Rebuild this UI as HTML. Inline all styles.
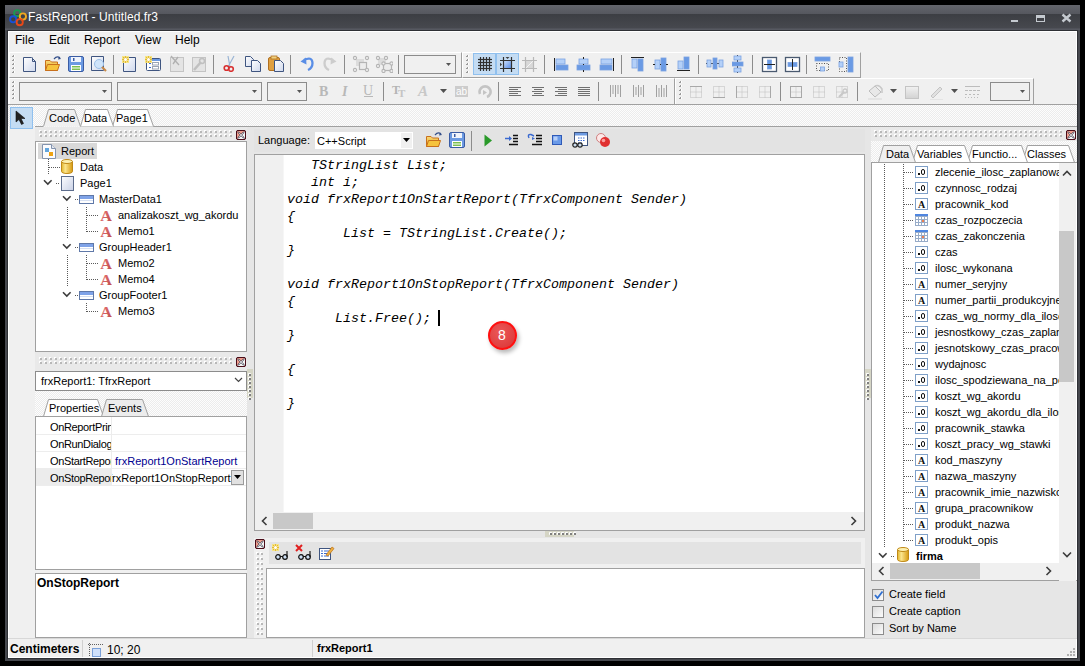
<!DOCTYPE html>
<html><head><meta charset="utf-8"><style>
html,body{margin:0;padding:0;width:1085px;height:666px;overflow:hidden;background:#000;}
div,svg{position:absolute;}
.t{white-space:pre;font-family:"Liberation Sans",sans-serif;}
.code{font-family:"Liberation Mono",monospace;font-style:italic;font-size:13.333px;line-height:13px;color:#000;}
</style></head><body>
<div style="left:5px;top:5px;width:1075px;height:656px;background:#46484e;"></div>
<div style="left:5px;top:5px;width:1075px;height:9px;background:linear-gradient(#63656c,#55575e);"></div>
<div style="left:5px;top:14px;width:1075px;height:15px;background:linear-gradient(#3c3e43,#47494f);"></div>
<div style="left:5px;top:28px;width:1075px;height:2px;background:linear-gradient(#4c4e55,#5a5d65);"></div>
<div style="left:7px;top:30px;width:1071px;height:629px;background:#2e3035;"></div>
<div style="left:8px;top:31px;width:1069px;height:627px;background:#f0f0f0;border:1px solid #fff;box-sizing:border-box;"></div>
<div class="t" style="left:28px;top:11px;font-size:12px;line-height:12px;font-weight:400;color:#fff;letter-spacing:0.08px;">FastReport - Untitled.fr3</div>
<div style="left:1011px;top:20px;width:7px;height:2px;background:#c4c9cf;"></div>
<div style="left:1036px;top:15px;width:9px;height:7px;border:1px solid #c4c9cf;border-top-width:3px;box-sizing:border-box;"></div>
<svg style="left:1061px;top:13px;" width="11" height="10" viewBox="0 0 11 10"><path d="M1.5 1.5 L9.5 8.5 M9.5 1.5 L1.5 8.5" stroke="#c4c9cf" stroke-width="2.4"/></svg>
<div class="t" style="left:15px;top:34px;font-size:12px;line-height:12px;font-weight:400;color:#000;">File</div>
<div class="t" style="left:49px;top:34px;font-size:12px;line-height:12px;font-weight:400;color:#000;">Edit</div>
<div class="t" style="left:84px;top:34px;font-size:12px;line-height:12px;font-weight:400;color:#000;">Report</div>
<div class="t" style="left:135px;top:34px;font-size:12px;line-height:12px;font-weight:400;color:#000;">View</div>
<div class="t" style="left:175px;top:34px;font-size:12px;line-height:12px;font-weight:400;color:#000;">Help</div>
<div style="left:9px;top:52px;width:453px;height:26px;background:#f0f0f0;border-top:1px solid #fff;border-left:1px solid #fff;border-right:1px solid #a0a0a0;border-bottom:1px solid #a0a0a0;box-sizing:border-box;"></div>
<div style="left:462px;top:52px;width:399px;height:26px;background:#f0f0f0;border-top:1px solid #fff;border-left:1px solid #fff;border-right:1px solid #a0a0a0;border-bottom:1px solid #a0a0a0;box-sizing:border-box;"></div>
<div style="left:9px;top:78px;width:666px;height:27px;background:#f0f0f0;border-top:1px solid #fff;border-left:1px solid #fff;border-right:1px solid #a0a0a0;border-bottom:1px solid #a0a0a0;box-sizing:border-box;"></div>
<div style="left:675px;top:78px;width:359px;height:27px;background:#f0f0f0;border-top:1px solid #fff;border-left:1px solid #fff;border-right:1px solid #a0a0a0;border-bottom:1px solid #a0a0a0;box-sizing:border-box;"></div>
<div style="left:113px;top:55px;width:1px;height:19px;background:#8c8c8c;"></div>
<div style="left:213px;top:55px;width:1px;height:19px;background:#8c8c8c;"></div>
<div style="left:290px;top:55px;width:1px;height:19px;background:#8c8c8c;"></div>
<div style="left:344px;top:55px;width:1px;height:19px;background:#8c8c8c;"></div>
<div style="left:398px;top:55px;width:1px;height:19px;background:#8c8c8c;"></div>
<div style="left:544px;top:55px;width:1px;height:19px;background:#8c8c8c;"></div>
<div style="left:621px;top:55px;width:1px;height:19px;background:#8c8c8c;"></div>
<div style="left:698px;top:55px;width:1px;height:19px;background:#8c8c8c;"></div>
<div style="left:752px;top:55px;width:1px;height:19px;background:#8c8c8c;"></div>
<div style="left:806px;top:55px;width:1px;height:19px;background:#8c8c8c;"></div>
<div style="left:383px;top:82px;width:1px;height:19px;background:#8c8c8c;"></div>
<div style="left:498px;top:82px;width:1px;height:19px;background:#8c8c8c;"></div>
<div style="left:598px;top:82px;width:1px;height:19px;background:#8c8c8c;"></div>
<div style="left:780px;top:82px;width:1px;height:19px;background:#8c8c8c;"></div>
<div style="left:857px;top:82px;width:1px;height:19px;background:#8c8c8c;"></div>
<svg style="left:12px;top:55px" width="3" height="21"><rect x="1" y="0" width="2" height="2" fill="#fff"/><rect x="0" y="1" width="2" height="1" fill="#9a9a9a"/><rect x="1" y="0" width="1" height="2" fill="#9a9a9a"/><rect x="1" y="4" width="2" height="2" fill="#fff"/><rect x="0" y="5" width="2" height="1" fill="#9a9a9a"/><rect x="1" y="4" width="1" height="2" fill="#9a9a9a"/><rect x="1" y="8" width="2" height="2" fill="#fff"/><rect x="0" y="9" width="2" height="1" fill="#9a9a9a"/><rect x="1" y="8" width="1" height="2" fill="#9a9a9a"/><rect x="1" y="12" width="2" height="2" fill="#fff"/><rect x="0" y="13" width="2" height="1" fill="#9a9a9a"/><rect x="1" y="12" width="1" height="2" fill="#9a9a9a"/><rect x="1" y="16" width="2" height="2" fill="#fff"/><rect x="0" y="17" width="2" height="1" fill="#9a9a9a"/><rect x="1" y="16" width="1" height="2" fill="#9a9a9a"/></svg>
<svg style="left:466px;top:55px" width="3" height="21"><rect x="1" y="0" width="2" height="2" fill="#fff"/><rect x="0" y="1" width="2" height="1" fill="#9a9a9a"/><rect x="1" y="0" width="1" height="2" fill="#9a9a9a"/><rect x="1" y="4" width="2" height="2" fill="#fff"/><rect x="0" y="5" width="2" height="1" fill="#9a9a9a"/><rect x="1" y="4" width="1" height="2" fill="#9a9a9a"/><rect x="1" y="8" width="2" height="2" fill="#fff"/><rect x="0" y="9" width="2" height="1" fill="#9a9a9a"/><rect x="1" y="8" width="1" height="2" fill="#9a9a9a"/><rect x="1" y="12" width="2" height="2" fill="#fff"/><rect x="0" y="13" width="2" height="1" fill="#9a9a9a"/><rect x="1" y="12" width="1" height="2" fill="#9a9a9a"/><rect x="1" y="16" width="2" height="2" fill="#fff"/><rect x="0" y="17" width="2" height="1" fill="#9a9a9a"/><rect x="1" y="16" width="1" height="2" fill="#9a9a9a"/></svg>
<svg style="left:12px;top:81px" width="3" height="22"><rect x="1" y="0" width="2" height="2" fill="#fff"/><rect x="0" y="1" width="2" height="1" fill="#9a9a9a"/><rect x="1" y="0" width="1" height="2" fill="#9a9a9a"/><rect x="1" y="4" width="2" height="2" fill="#fff"/><rect x="0" y="5" width="2" height="1" fill="#9a9a9a"/><rect x="1" y="4" width="1" height="2" fill="#9a9a9a"/><rect x="1" y="8" width="2" height="2" fill="#fff"/><rect x="0" y="9" width="2" height="1" fill="#9a9a9a"/><rect x="1" y="8" width="1" height="2" fill="#9a9a9a"/><rect x="1" y="12" width="2" height="2" fill="#fff"/><rect x="0" y="13" width="2" height="1" fill="#9a9a9a"/><rect x="1" y="12" width="1" height="2" fill="#9a9a9a"/><rect x="1" y="16" width="2" height="2" fill="#fff"/><rect x="0" y="17" width="2" height="1" fill="#9a9a9a"/><rect x="1" y="16" width="1" height="2" fill="#9a9a9a"/></svg>
<svg style="left:679px;top:81px" width="3" height="22"><rect x="1" y="0" width="2" height="2" fill="#fff"/><rect x="0" y="1" width="2" height="1" fill="#9a9a9a"/><rect x="1" y="0" width="1" height="2" fill="#9a9a9a"/><rect x="1" y="4" width="2" height="2" fill="#fff"/><rect x="0" y="5" width="2" height="1" fill="#9a9a9a"/><rect x="1" y="4" width="1" height="2" fill="#9a9a9a"/><rect x="1" y="8" width="2" height="2" fill="#fff"/><rect x="0" y="9" width="2" height="1" fill="#9a9a9a"/><rect x="1" y="8" width="1" height="2" fill="#9a9a9a"/><rect x="1" y="12" width="2" height="2" fill="#fff"/><rect x="0" y="13" width="2" height="1" fill="#9a9a9a"/><rect x="1" y="12" width="1" height="2" fill="#9a9a9a"/><rect x="1" y="16" width="2" height="2" fill="#fff"/><rect x="0" y="17" width="2" height="1" fill="#9a9a9a"/><rect x="1" y="16" width="1" height="2" fill="#9a9a9a"/></svg>
<div style="left:404px;top:55px;width:52px;height:19px;border:1px solid #8c8c8c;box-sizing:border-box;background:#f0f0f0;"></div>
<svg style="left:446px;top:63px;" width="6" height="4" viewBox="0 0 6 4"><path d="M0 0 H5 L2.5 3 Z" fill="#555"/></svg>
<div style="left:19px;top:82px;width:93px;height:19px;border:1px solid #8c8c8c;box-sizing:border-box;background:#f0f0f0;"></div>
<svg style="left:102px;top:90px;" width="6" height="4" viewBox="0 0 6 4"><path d="M0 0 H5 L2.5 3 Z" fill="#555"/></svg>
<div style="left:117px;top:82px;width:145px;height:19px;border:1px solid #8c8c8c;box-sizing:border-box;background:#f0f0f0;"></div>
<svg style="left:252px;top:90px;" width="6" height="4" viewBox="0 0 6 4"><path d="M0 0 H5 L2.5 3 Z" fill="#555"/></svg>
<div style="left:267px;top:82px;width:40px;height:19px;border:1px solid #8c8c8c;box-sizing:border-box;background:#f0f0f0;"></div>
<svg style="left:297px;top:90px;" width="6" height="4" viewBox="0 0 6 4"><path d="M0 0 H5 L2.5 3 Z" fill="#555"/></svg>
<div style="left:990px;top:82px;width:40px;height:19px;border:1px solid #8c8c8c;box-sizing:border-box;background:#f0f0f0;"></div>
<svg style="left:1020px;top:90px;" width="6" height="4" viewBox="0 0 6 4"><path d="M0 0 H5 L2.5 3 Z" fill="#555"/></svg>
<div style="left:473px;top:53px;width:23px;height:22px;background:#c4dcf3;border:1px solid #90c0ee;box-sizing:border-box;"></div>
<div style="left:496px;top:53px;width:23px;height:22px;background:#c4dcf3;border:1px solid #90c0ee;box-sizing:border-box;"></div>
<div style="left:8px;top:104px;width:1069px;height:23px;background:repeating-conic-gradient(#ececec 0% 25%, #fdfdfd 0% 50%) 0 0/2px 2px;"></div>
<div style="left:8px;top:104px;width:1069px;height:1px;background:#a0a0a0;"></div>
<div style="left:35px;top:126px;width:8px;height:1px;background:#a0a0a0;"></div>
<div style="left:81px;top:126px;width:996px;height:1px;background:#a0a0a0;"></div>
<div style="left:10px;top:107px;width:23px;height:22px;background:#c4dcf3;border:1px solid #90c0ee;box-sizing:border-box;"></div>
<svg style="left:112px;top:109px" width="42" height="18"><path d="M0.5 17.5 L5.5 0.5 H35.5 L41.5 17.5" fill="#fff" stroke="#a0a0a0" stroke-width="1"/></svg>
<svg style="left:80px;top:109px" width="34" height="18"><path d="M0.5 17.5 L5.5 0.5 H27.5 L33.5 17.5" fill="#fff" stroke="#a0a0a0" stroke-width="1"/></svg>
<svg style="left:43px;top:109px" width="38" height="18"><path d="M0.5 17.5 L5.5 0.5 H31.5 L37.5 17.5" fill="#f0f0f0" stroke="#a0a0a0" stroke-width="1"/></svg>
<div class="t" style="left:49px;top:113px;font-size:11px;line-height:11px;font-weight:400;color:#000;">Code</div>
<div class="t" style="left:84px;top:113px;font-size:11px;line-height:11px;font-weight:400;color:#000;">Data</div>
<div class="t" style="left:116px;top:113px;font-size:11px;line-height:11px;font-weight:400;color:#000;">Page1</div>
<div style="left:35px;top:127px;width:212px;height:14px;background:#e9e9e9;"></div>
<div style="left:35px;top:141px;width:212px;height:211px;background:#fff;border:1px solid #a0a0a0;box-sizing:border-box;"></div>
<div style="left:35px;top:352px;width:212px;height:19px;background:#e9e9e9;"></div>
<div style="left:35px;top:371px;width:212px;height:20px;background:#fff;border:1px solid #8c8c8c;box-sizing:border-box;"></div>
<div class="t" style="left:41px;top:376px;font-size:11px;line-height:11px;font-weight:400;color:#000;">frxReport1: TfrxReport</div>
<svg style="left:234px;top:377px;" width="10" height="7" viewBox="0 0 10 7"><path d="M1 1 L4.5 4.5 L8 1" stroke="#444" stroke-width="1.2" fill="none"/></svg>
<div style="left:35px;top:391px;width:212px;height:26px;background:repeating-conic-gradient(#ececec 0% 25%, #fdfdfd 0% 50%) 0 0/2px 2px;"></div>
<svg style="left:43px;top:399px" width="61" height="18"><path d="M0.5 17.5 L5.5 0.5 H54.5 L60.5 17.5" fill="#fff" stroke="#a0a0a0" stroke-width="1"/></svg>
<svg style="left:101px;top:399px" width="48" height="18"><path d="M0.5 17.5 L5.5 0.5 H41.5 L47.5 17.5" fill="#ececec" stroke="#a0a0a0" stroke-width="1"/></svg>
<div class="t" style="left:49px;top:403px;font-size:11px;line-height:11px;font-weight:400;color:#000;">Properties</div>
<div class="t" style="left:108px;top:403px;font-size:11px;line-height:11px;font-weight:400;color:#000;">Events</div>
<div style="left:35px;top:416px;width:212px;height:154px;background:#fff;border:1px solid #a0a0a0;box-sizing:border-box;"></div>
<div style="left:35px;top:573px;width:212px;height:65px;background:#fff;border:1px solid #a0a0a0;box-sizing:border-box;"></div>
<div class="t" style="left:37px;top:577px;font-size:12px;line-height:12px;font-weight:700;color:#000;">OnStopReport</div>
<div style="left:247px;top:127px;width:7px;height:511px;background:#e6e6e6;"></div>
<div style="left:247px;top:369px;width:6px;height:29px;background:#d5d5c5;"></div>
<div style="left:254px;top:127px;width:611px;height:27px;background:#e6e6e6;"></div>
<div style="left:254px;top:129px;width:611px;height:23px;background:#e3e3e3;"></div>
<div class="t" style="left:258px;top:135px;font-size:11px;line-height:11px;font-weight:400;color:#000;">Language:</div>
<div style="left:315px;top:132px;width:98px;height:17px;background:#fff;"></div>
<div style="left:401px;top:133px;width:11px;height:15px;background:#f0f0f0;"></div>
<svg style="left:403px;top:138px;" width="7" height="4" viewBox="0 0 7 4"><path d="M0 0 H7 L3.5 4 Z" fill="#000"/></svg>
<div class="t" style="left:317px;top:136px;font-size:11px;line-height:11px;font-weight:400;color:#000;">C++Script</div>
<div style="left:471px;top:131px;width:1px;height:20px;background:#8c8c8c;"></div>
<div style="left:254px;top:154px;width:611px;height:377px;background:#fff;border:1px solid #a0a0a0;box-sizing:border-box;"></div>
<div style="left:255px;top:155px;width:28px;height:357px;background:#f0f0f0;"></div>
<div style="left:283px;top:155px;width:1px;height:357px;background:#f6f6f6;"></div>
<div style="left:255px;top:512px;width:609px;height:18px;background:#f0f0f0;"></div>
<div style="left:273px;top:513px;width:40px;height:16px;background:#c8c8c8;"></div>
<div class="t code" style="left:287px;top:159px">   TStringList List;</div>
<div class="t code" style="left:287px;top:176px">   int i;</div>
<div class="t code" style="left:287px;top:193px">void frxReport1OnStartReport(TfrxComponent Sender)</div>
<div class="t code" style="left:287px;top:210px">{</div>
<div class="t code" style="left:287px;top:227px">       List = TStringList.Create();</div>
<div class="t code" style="left:287px;top:244px">}</div>
<div class="t code" style="left:287px;top:261px"></div>
<div class="t code" style="left:287px;top:278px">void frxReport1OnStopReport(TfrxComponent Sender)</div>
<div class="t code" style="left:287px;top:295px">{</div>
<div class="t code" style="left:287px;top:312px">      List.Free(); </div>
<div class="t code" style="left:287px;top:329px">}</div>
<div class="t code" style="left:287px;top:346px"></div>
<div class="t code" style="left:287px;top:363px">{</div>
<div class="t code" style="left:287px;top:380px"></div>
<div class="t code" style="left:287px;top:397px">}</div>
<div style="left:438px;top:310px;width:2px;height:16px;background:#000;"></div>
<div style="left:254px;top:531px;width:611px;height:7px;background:#e6e6e6;"></div>
<div style="left:545px;top:531px;width:29px;height:6px;background:#d5d5c5;"></div>
<div style="left:254px;top:538px;width:611px;height:100px;background:#f0f0f0;"></div>
<div style="left:269px;top:542px;width:592px;height:22px;background:#e3e3e3;"></div>
<div style="left:266px;top:568px;width:599px;height:70px;background:#fff;border:1px solid #a0a0a0;box-sizing:border-box;"></div>
<div style="left:865px;top:127px;width:6px;height:511px;background:#e6e6e6;"></div>
<div style="left:865px;top:369px;width:6px;height:29px;background:#d5d5c5;"></div>
<div style="left:871px;top:127px;width:206px;height:14px;background:#e9e9e9;"></div>
<div style="left:871px;top:141px;width:206px;height:21px;background:repeating-conic-gradient(#ececec 0% 25%, #fdfdfd 0% 50%) 0 0/2px 2px;"></div>
<svg style="left:1022px;top:145px" width="53" height="18"><path d="M0.5 17.5 L5.5 0.5 H46.5 L52.5 17.5" fill="#fff" stroke="#a0a0a0" stroke-width="1"/></svg>
<svg style="left:967px;top:145px" width="61" height="18"><path d="M0.5 17.5 L5.5 0.5 H54.5 L60.5 17.5" fill="#fff" stroke="#a0a0a0" stroke-width="1"/></svg>
<svg style="left:912px;top:145px" width="59" height="18"><path d="M0.5 17.5 L5.5 0.5 H52.5 L58.5 17.5" fill="#fff" stroke="#a0a0a0" stroke-width="1"/></svg>
<svg style="left:878px;top:145px" width="38" height="18"><path d="M0.5 17.5 L5.5 0.5 H31.5 L37.5 17.5" fill="#f0f0f0" stroke="#a0a0a0" stroke-width="1"/></svg>
<div class="t" style="left:886px;top:149px;font-size:11px;line-height:11px;font-weight:400;color:#000;">Data</div>
<div class="t" style="left:917px;top:149px;font-size:11px;line-height:11px;font-weight:400;color:#000;">Variables</div>
<div class="t" style="left:972px;top:149px;font-size:11px;line-height:11px;font-weight:400;color:#000;">Functio...</div>
<div class="t" style="left:1027px;top:149px;font-size:11px;line-height:11px;font-weight:400;color:#000;">Classes</div>
<div style="left:871px;top:162px;width:206px;height:419px;background:#fff;border:1px solid #a0a0a0;border-right:none;box-sizing:border-box;"></div>
<div style="left:1059px;top:163px;width:17px;height:400px;background:#f0f0f0;"></div>
<div style="left:1059px;top:231px;width:15px;height:151px;background:#c8c8c8;"></div>
<div style="left:872px;top:563px;width:187px;height:17px;background:#f0f0f0;"></div>
<div style="left:890px;top:563px;width:90px;height:16px;background:#c8c8c8;"></div>
<div style="left:871px;top:581px;width:206px;height:57px;background:#e6e6e6;"></div>
<div style="left:1059px;top:563px;width:17px;height:18px;background:#f0f0f0;"></div>
<div style="left:872px;top:589px;width:12px;height:12px;background:linear-gradient(135deg,#dcdcdc,#fbfbfb);border:1px solid #8c8c8c;box-sizing:border-box;"></div>
<div class="t" style="left:889px;top:589px;font-size:11px;line-height:11px;font-weight:400;color:#000;">Create field</div>
<div style="left:872px;top:606px;width:12px;height:12px;background:linear-gradient(135deg,#dcdcdc,#fbfbfb);border:1px solid #8c8c8c;box-sizing:border-box;"></div>
<div class="t" style="left:889px;top:606px;font-size:11px;line-height:11px;font-weight:400;color:#000;">Create caption</div>
<div style="left:872px;top:623px;width:12px;height:12px;background:linear-gradient(135deg,#dcdcdc,#fbfbfb);border:1px solid #8c8c8c;box-sizing:border-box;"></div>
<div class="t" style="left:889px;top:623px;font-size:11px;line-height:11px;font-weight:400;color:#000;">Sort by Name</div>
<div style="left:38px;top:143px;width:59px;height:16px;background:#d9d9d9;"></div>
<div style="left:36px;top:142px;width:210px;height:208px;overflow:hidden;">
<div class="t" style="left:25px;top:4px;font-size:11px;line-height:11px;">Report</div>
<div class="t" style="left:44px;top:20px;font-size:11px;line-height:11px;">Data</div>
<div class="t" style="left:44px;top:36px;font-size:11px;line-height:11px;">Page1</div>
<div class="t" style="left:63px;top:52px;font-size:11px;line-height:11px;">MasterData1</div>
<div class="t" style="left:82px;top:68px;font-size:11px;line-height:11px;">analizakoszt_wg_akordu</div>
<div class="t" style="left:82px;top:84px;font-size:11px;line-height:11px;">Memo1</div>
<div class="t" style="left:63px;top:100px;font-size:11px;line-height:11px;">GroupHeader1</div>
<div class="t" style="left:82px;top:116px;font-size:11px;line-height:11px;">Memo2</div>
<div class="t" style="left:82px;top:132px;font-size:11px;line-height:11px;">Memo4</div>
<div class="t" style="left:63px;top:148px;font-size:11px;line-height:11px;">GroupFooter1</div>
<div class="t" style="left:82px;top:164px;font-size:11px;line-height:11px;">Memo3</div>
</div>
<svg style="left:42px;top:144px;" width="14" height="15" viewBox="0 0 14 15"><path d="M0.5 0.5 H9.5 L13.5 4.5 V14.5 H0.5 Z" fill="#fbfbfd" stroke="#8393ad"/><path d="M9.5 0.5 V4.5 H13.5" fill="#e4e8f0" stroke="#8393ad"/><rect x="3" y="4" width="4" height="4" fill="#63a6dd"/><rect x="7" y="8" width="4" height="4" fill="#eea312"/></svg>
<svg style="left:61px;top:159px;" width="12" height="15" viewBox="0 0 12 15"><defs><linearGradient id="dbg" x1="0" x2="1"><stop offset="0" stop-color="#e2b52a"/><stop offset="0.35" stop-color="#fbe58e"/><stop offset="1" stop-color="#d79a10"/></linearGradient></defs><path d="M0.5 2.5 V12.5 A5.5 2 0 0 0 11.5 12.5 V2.5" fill="url(#dbg)" stroke="#c08a18"/><ellipse cx="6" cy="2.5" rx="5.5" ry="2" fill="#fdf0b0" stroke="#c08a18"/></svg>
<svg style="left:61px;top:176px;" width="13" height="15" viewBox="0 0 13 15"><defs><linearGradient id="pg" x1="0" y1="0" x2="1" y2="1"><stop offset="0" stop-color="#fdfdff"/><stop offset="1" stop-color="#c9d1e6"/></linearGradient></defs><rect x="0.5" y="0.5" width="12" height="14" fill="url(#pg)" stroke="#5c6c8c"/></svg>
<svg style="left:43px;top:179px;" width="10" height="7" viewBox="0 0 10 7"><path d="M1 1.2 L4.8 5 L8.6 1.2" stroke="#3c3c3c" stroke-width="1.6" fill="none"/></svg>
<div style="left:56px;top:183px;width:3px;height:1px;background:repeating-linear-gradient(90deg,#5a5a5a 0 1px,transparent 1px 2px);"></div>
<svg style="left:79px;top:195px;" width="15" height="9" viewBox="0 0 15 9"><rect x="0.5" y="0.5" width="14" height="8" fill="#fff" stroke="#5f78a8"/><rect x="1" y="1" width="13" height="3" fill="#7fa3e8"/><rect x="1" y="5" width="13" height="1" fill="#d5dff2"/></svg>
<svg style="left:62px;top:195px;" width="10" height="7" viewBox="0 0 10 7"><path d="M1 1.2 L4.8 5 L8.6 1.2" stroke="#3c3c3c" stroke-width="1.6" fill="none"/></svg>
<div style="left:75px;top:199px;width:3px;height:1px;background:repeating-linear-gradient(90deg,#5a5a5a 0 1px,transparent 1px 2px);"></div>
<svg style="left:99px;top:210px;" width="13" height="12" viewBox="0 0 13 12"><defs><linearGradient id="ma" x1="0" y1="0" x2="1" y2="1"><stop offset="0" stop-color="#f07a7a"/><stop offset="1" stop-color="#b84848"/></linearGradient></defs><text x="6.5" y="11" text-anchor="middle" font-family="Liberation Serif" font-weight="700" font-size="15" fill="url(#ma)" transform="scale(1.08,1)">A</text></svg>
<svg style="left:99px;top:226px;" width="13" height="12" viewBox="0 0 13 12"><defs><linearGradient id="ma" x1="0" y1="0" x2="1" y2="1"><stop offset="0" stop-color="#f07a7a"/><stop offset="1" stop-color="#b84848"/></linearGradient></defs><text x="6.5" y="11" text-anchor="middle" font-family="Liberation Serif" font-weight="700" font-size="15" fill="url(#ma)" transform="scale(1.08,1)">A</text></svg>
<svg style="left:79px;top:243px;" width="15" height="9" viewBox="0 0 15 9"><rect x="0.5" y="0.5" width="14" height="8" fill="#fff" stroke="#5f78a8"/><rect x="1" y="1" width="13" height="3" fill="#7fa3e8"/><rect x="1" y="5" width="13" height="1" fill="#d5dff2"/></svg>
<svg style="left:62px;top:243px;" width="10" height="7" viewBox="0 0 10 7"><path d="M1 1.2 L4.8 5 L8.6 1.2" stroke="#3c3c3c" stroke-width="1.6" fill="none"/></svg>
<div style="left:75px;top:247px;width:3px;height:1px;background:repeating-linear-gradient(90deg,#5a5a5a 0 1px,transparent 1px 2px);"></div>
<svg style="left:99px;top:258px;" width="13" height="12" viewBox="0 0 13 12"><defs><linearGradient id="ma" x1="0" y1="0" x2="1" y2="1"><stop offset="0" stop-color="#f07a7a"/><stop offset="1" stop-color="#b84848"/></linearGradient></defs><text x="6.5" y="11" text-anchor="middle" font-family="Liberation Serif" font-weight="700" font-size="15" fill="url(#ma)" transform="scale(1.08,1)">A</text></svg>
<svg style="left:99px;top:274px;" width="13" height="12" viewBox="0 0 13 12"><defs><linearGradient id="ma" x1="0" y1="0" x2="1" y2="1"><stop offset="0" stop-color="#f07a7a"/><stop offset="1" stop-color="#b84848"/></linearGradient></defs><text x="6.5" y="11" text-anchor="middle" font-family="Liberation Serif" font-weight="700" font-size="15" fill="url(#ma)" transform="scale(1.08,1)">A</text></svg>
<svg style="left:79px;top:291px;" width="15" height="9" viewBox="0 0 15 9"><rect x="0.5" y="0.5" width="14" height="8" fill="#fff" stroke="#5f78a8"/><rect x="1" y="1" width="13" height="3" fill="#7fa3e8"/><rect x="1" y="5" width="13" height="1" fill="#d5dff2"/></svg>
<svg style="left:62px;top:291px;" width="10" height="7" viewBox="0 0 10 7"><path d="M1 1.2 L4.8 5 L8.6 1.2" stroke="#3c3c3c" stroke-width="1.6" fill="none"/></svg>
<div style="left:75px;top:295px;width:3px;height:1px;background:repeating-linear-gradient(90deg,#5a5a5a 0 1px,transparent 1px 2px);"></div>
<svg style="left:99px;top:306px;" width="13" height="12" viewBox="0 0 13 12"><defs><linearGradient id="ma" x1="0" y1="0" x2="1" y2="1"><stop offset="0" stop-color="#f07a7a"/><stop offset="1" stop-color="#b84848"/></linearGradient></defs><text x="6.5" y="11" text-anchor="middle" font-family="Liberation Serif" font-weight="700" font-size="15" fill="url(#ma)" transform="scale(1.08,1)">A</text></svg>
<div style="left:48px;top:159px;width:1px;height:16px;background:repeating-linear-gradient(#5a5a5a 0 1px,transparent 1px 2px);"></div>
<div style="left:49px;top:167px;width:11px;height:1px;background:repeating-linear-gradient(90deg,#5a5a5a 0 1px,transparent 1px 2px);"></div>
<div style="left:67px;top:207px;width:1px;height:32px;background:repeating-linear-gradient(#5a5a5a 0 1px,transparent 1px 2px);"></div>
<div style="left:67px;top:255px;width:1px;height:32px;background:repeating-linear-gradient(#5a5a5a 0 1px,transparent 1px 2px);"></div>
<div style="left:86px;top:207px;width:1px;height:25px;background:repeating-linear-gradient(#5a5a5a 0 1px,transparent 1px 2px);"></div>
<div style="left:86px;top:255px;width:1px;height:25px;background:repeating-linear-gradient(#5a5a5a 0 1px,transparent 1px 2px);"></div>
<div style="left:87px;top:215px;width:11px;height:1px;background:repeating-linear-gradient(90deg,#5a5a5a 0 1px,transparent 1px 2px);"></div>
<div style="left:87px;top:231px;width:11px;height:1px;background:repeating-linear-gradient(90deg,#5a5a5a 0 1px,transparent 1px 2px);"></div>
<div style="left:87px;top:263px;width:11px;height:1px;background:repeating-linear-gradient(90deg,#5a5a5a 0 1px,transparent 1px 2px);"></div>
<div style="left:87px;top:279px;width:11px;height:1px;background:repeating-linear-gradient(90deg,#5a5a5a 0 1px,transparent 1px 2px);"></div>
<div style="left:87px;top:311px;width:11px;height:1px;background:repeating-linear-gradient(90deg,#5a5a5a 0 1px,transparent 1px 2px);"></div>
<div style="left:86px;top:303px;width:1px;height:9px;background:repeating-linear-gradient(#5a5a5a 0 1px,transparent 1px 2px);"></div>
<div style="left:36px;top:417px;width:210px;height:152px;overflow:hidden;">
<div style="left:0;top:17px;width:210px;height:1px;background:#ededed;"></div>
<div style="left:0;top:34px;width:210px;height:1px;background:#ededed;"></div>
<div style="left:0;top:51px;width:210px;height:1px;background:#ededed;"></div>
<div style="left:0;top:68px;width:210px;height:1px;background:#ededed;"></div>
<div style="left:0;top:51px;width:75px;height:17px;background:#ececec;"></div>
<div style="left:75px;top:0;width:1px;height:68px;background:#ececec;"></div>
<div style="left:14px;top:0px;width:61px;height:17px;overflow:hidden;"><div class="t" style="left:0;top:5px;font-size:11px;line-height:11px;letter-spacing:-0.35px;">OnReportPrint</div></div>
<div style="left:14px;top:17px;width:61px;height:17px;overflow:hidden;"><div class="t" style="left:0;top:5px;font-size:11px;line-height:11px;letter-spacing:-0.35px;">OnRunDialog</div></div>
<div style="left:14px;top:34px;width:61px;height:17px;overflow:hidden;"><div class="t" style="left:0;top:5px;font-size:11px;line-height:11px;letter-spacing:-0.35px;">OnStartReport</div></div>
<div style="left:14px;top:51px;width:61px;height:17px;overflow:hidden;"><div class="t" style="left:0;top:5px;font-size:11px;line-height:11px;letter-spacing:-0.35px;">OnStopReport</div></div>
<div class="t" style="left:79px;top:39px;font-size:11px;line-height:11px;color:#000090;">frxReport1OnStartReport</div>
<div style="left:76px;top:51px;width:119px;height:17px;overflow:hidden;"><div class="t" style="left:-3px;top:5px;font-size:11px;line-height:11px;">frxReport1OnStopReport</div></div>
</div>
<div style="left:231px;top:470px;width:13px;height:15px;background:#e1e1e1;border:1px solid #9a9a9a;box-sizing:border-box;"></div>
<svg style="left:234px;top:475px;" width="7" height="4" viewBox="0 0 7 4"><path d="M0 0 H7 L3.5 4 Z" fill="#000"/></svg>
<div style="left:872px;top:163px;width:187px;height:401px;overflow:hidden;">
<div class="t" style="left:63px;top:4px;font-size:11px;line-height:11px;">zlecenie_ilosc_zaplanowane</div>
<div class="t" style="left:63px;top:20px;font-size:11px;line-height:11px;">czynnosc_rodzaj</div>
<div class="t" style="left:63px;top:36px;font-size:11px;line-height:11px;">pracownik_kod</div>
<div class="t" style="left:63px;top:52px;font-size:11px;line-height:11px;">czas_rozpoczecia</div>
<div class="t" style="left:63px;top:68px;font-size:11px;line-height:11px;">czas_zakonczenia</div>
<div class="t" style="left:63px;top:84px;font-size:11px;line-height:11px;">czas</div>
<div class="t" style="left:63px;top:100px;font-size:11px;line-height:11px;">ilosc_wykonana</div>
<div class="t" style="left:63px;top:116px;font-size:11px;line-height:11px;">numer_seryjny</div>
<div class="t" style="left:63px;top:132px;font-size:11px;line-height:11px;">numer_partii_produkcyjnej</div>
<div class="t" style="left:63px;top:148px;font-size:11px;line-height:11px;">czas_wg_normy_dla_ilosci</div>
<div class="t" style="left:63px;top:164px;font-size:11px;line-height:11px;">jesnostkowy_czas_zaplanowany</div>
<div class="t" style="left:63px;top:180px;font-size:11px;line-height:11px;">jesnotskowy_czas_pracownika</div>
<div class="t" style="left:63px;top:196px;font-size:11px;line-height:11px;">wydajnosc</div>
<div class="t" style="left:63px;top:212px;font-size:11px;line-height:11px;">ilosc_spodziewana_na_podstawie</div>
<div class="t" style="left:63px;top:228px;font-size:11px;line-height:11px;">koszt_wg_akordu</div>
<div class="t" style="left:63px;top:244px;font-size:11px;line-height:11px;">koszt_wg_akordu_dla_ilosci</div>
<div class="t" style="left:63px;top:260px;font-size:11px;line-height:11px;">pracownik_stawka</div>
<div class="t" style="left:63px;top:276px;font-size:11px;line-height:11px;">koszt_pracy_wg_stawki</div>
<div class="t" style="left:63px;top:292px;font-size:11px;line-height:11px;">kod_maszyny</div>
<div class="t" style="left:63px;top:308px;font-size:11px;line-height:11px;">nazwa_maszyny</div>
<div class="t" style="left:63px;top:324px;font-size:11px;line-height:11px;">pracownik_imie_nazwisko</div>
<div class="t" style="left:63px;top:340px;font-size:11px;line-height:11px;">grupa_pracownikow</div>
<div class="t" style="left:63px;top:356px;font-size:11px;line-height:11px;">produkt_nazwa</div>
<div class="t" style="left:63px;top:372px;font-size:11px;line-height:11px;">produkt_opis</div>
<div class="t" style="left:44px;top:388px;font-size:11px;line-height:11px;font-weight:700;">firma</div>
</div>
<svg style="left:915px;top:166px;" width="13" height="12" viewBox="0 0 13 12"><rect x="0.5" y="0.5" width="12" height="11" fill="#fff" stroke="#7fa0c8"/><rect x="3" y="7" width="2" height="2" fill="#111"/><rect x="6.5" y="3.5" width="3" height="5" rx="1.5" fill="none" stroke="#111" stroke-width="1"/></svg>
<div style="left:904px;top:172px;width:10px;height:1px;background:repeating-linear-gradient(90deg,#5a5a5a 0 1px,transparent 1px 2px);"></div>
<svg style="left:915px;top:182px;" width="13" height="12" viewBox="0 0 13 12"><rect x="0.5" y="0.5" width="12" height="11" fill="#fff" stroke="#7fa0c8"/><rect x="3" y="7" width="2" height="2" fill="#111"/><rect x="6.5" y="3.5" width="3" height="5" rx="1.5" fill="none" stroke="#111" stroke-width="1"/></svg>
<div style="left:904px;top:188px;width:10px;height:1px;background:repeating-linear-gradient(90deg,#5a5a5a 0 1px,transparent 1px 2px);"></div>
<svg style="left:915px;top:198px;" width="13" height="12" viewBox="0 0 13 12"><rect x="0.5" y="0.5" width="12" height="11" fill="#fff" stroke="#7fa0c8"/><text x="6.5" y="10" text-anchor="middle" font-family="Liberation Serif" font-weight="700" font-size="10" fill="#111">A</text></svg>
<div style="left:904px;top:204px;width:10px;height:1px;background:repeating-linear-gradient(90deg,#5a5a5a 0 1px,transparent 1px 2px);"></div>
<svg style="left:915px;top:214px;" width="13" height="12" viewBox="0 0 13 12"><rect x="0" y="0" width="13" height="12" fill="#98acc8"/><rect x="0" y="0" width="13" height="2" fill="#4f86e0"/><rect x="1" y="3" width="2" height="2" fill="#fff"/><rect x="1" y="6" width="2" height="2" fill="#fff"/><rect x="1" y="9" width="2" height="2" fill="#fff"/><rect x="4" y="3" width="2" height="2" fill="#fff"/><rect x="4" y="6" width="2" height="2" fill="#fff"/><rect x="4" y="9" width="2" height="2" fill="#fff"/><rect x="7" y="3" width="2" height="2" fill="#fff"/><rect x="7" y="6" width="2" height="2" fill="#f08050"/><rect x="7" y="9" width="2" height="2" fill="#fff"/><rect x="10" y="3" width="2" height="2" fill="#fff"/><rect x="10" y="6" width="2" height="2" fill="#fff"/><rect x="10" y="9" width="2" height="2" fill="#fff"/></svg>
<div style="left:904px;top:220px;width:10px;height:1px;background:repeating-linear-gradient(90deg,#5a5a5a 0 1px,transparent 1px 2px);"></div>
<svg style="left:915px;top:230px;" width="13" height="12" viewBox="0 0 13 12"><rect x="0" y="0" width="13" height="12" fill="#98acc8"/><rect x="0" y="0" width="13" height="2" fill="#4f86e0"/><rect x="1" y="3" width="2" height="2" fill="#fff"/><rect x="1" y="6" width="2" height="2" fill="#fff"/><rect x="1" y="9" width="2" height="2" fill="#fff"/><rect x="4" y="3" width="2" height="2" fill="#fff"/><rect x="4" y="6" width="2" height="2" fill="#fff"/><rect x="4" y="9" width="2" height="2" fill="#fff"/><rect x="7" y="3" width="2" height="2" fill="#fff"/><rect x="7" y="6" width="2" height="2" fill="#f08050"/><rect x="7" y="9" width="2" height="2" fill="#fff"/><rect x="10" y="3" width="2" height="2" fill="#fff"/><rect x="10" y="6" width="2" height="2" fill="#fff"/><rect x="10" y="9" width="2" height="2" fill="#fff"/></svg>
<div style="left:904px;top:236px;width:10px;height:1px;background:repeating-linear-gradient(90deg,#5a5a5a 0 1px,transparent 1px 2px);"></div>
<svg style="left:915px;top:246px;" width="13" height="12" viewBox="0 0 13 12"><rect x="0.5" y="0.5" width="12" height="11" fill="#fff" stroke="#7fa0c8"/><rect x="3" y="7" width="2" height="2" fill="#111"/><rect x="6.5" y="3.5" width="3" height="5" rx="1.5" fill="none" stroke="#111" stroke-width="1"/></svg>
<div style="left:904px;top:252px;width:10px;height:1px;background:repeating-linear-gradient(90deg,#5a5a5a 0 1px,transparent 1px 2px);"></div>
<svg style="left:915px;top:262px;" width="13" height="12" viewBox="0 0 13 12"><rect x="0.5" y="0.5" width="12" height="11" fill="#fff" stroke="#7fa0c8"/><rect x="3" y="7" width="2" height="2" fill="#111"/><rect x="6.5" y="3.5" width="3" height="5" rx="1.5" fill="none" stroke="#111" stroke-width="1"/></svg>
<div style="left:904px;top:268px;width:10px;height:1px;background:repeating-linear-gradient(90deg,#5a5a5a 0 1px,transparent 1px 2px);"></div>
<svg style="left:915px;top:278px;" width="13" height="12" viewBox="0 0 13 12"><rect x="0.5" y="0.5" width="12" height="11" fill="#fff" stroke="#7fa0c8"/><text x="6.5" y="10" text-anchor="middle" font-family="Liberation Serif" font-weight="700" font-size="10" fill="#111">A</text></svg>
<div style="left:904px;top:284px;width:10px;height:1px;background:repeating-linear-gradient(90deg,#5a5a5a 0 1px,transparent 1px 2px);"></div>
<svg style="left:915px;top:294px;" width="13" height="12" viewBox="0 0 13 12"><rect x="0.5" y="0.5" width="12" height="11" fill="#fff" stroke="#7fa0c8"/><text x="6.5" y="10" text-anchor="middle" font-family="Liberation Serif" font-weight="700" font-size="10" fill="#111">A</text></svg>
<div style="left:904px;top:300px;width:10px;height:1px;background:repeating-linear-gradient(90deg,#5a5a5a 0 1px,transparent 1px 2px);"></div>
<svg style="left:915px;top:310px;" width="13" height="12" viewBox="0 0 13 12"><rect x="0.5" y="0.5" width="12" height="11" fill="#fff" stroke="#7fa0c8"/><rect x="3" y="7" width="2" height="2" fill="#111"/><rect x="6.5" y="3.5" width="3" height="5" rx="1.5" fill="none" stroke="#111" stroke-width="1"/></svg>
<div style="left:904px;top:316px;width:10px;height:1px;background:repeating-linear-gradient(90deg,#5a5a5a 0 1px,transparent 1px 2px);"></div>
<svg style="left:915px;top:326px;" width="13" height="12" viewBox="0 0 13 12"><rect x="0.5" y="0.5" width="12" height="11" fill="#fff" stroke="#7fa0c8"/><rect x="3" y="7" width="2" height="2" fill="#111"/><rect x="6.5" y="3.5" width="3" height="5" rx="1.5" fill="none" stroke="#111" stroke-width="1"/></svg>
<div style="left:904px;top:332px;width:10px;height:1px;background:repeating-linear-gradient(90deg,#5a5a5a 0 1px,transparent 1px 2px);"></div>
<svg style="left:915px;top:342px;" width="13" height="12" viewBox="0 0 13 12"><rect x="0.5" y="0.5" width="12" height="11" fill="#fff" stroke="#7fa0c8"/><rect x="3" y="7" width="2" height="2" fill="#111"/><rect x="6.5" y="3.5" width="3" height="5" rx="1.5" fill="none" stroke="#111" stroke-width="1"/></svg>
<div style="left:904px;top:348px;width:10px;height:1px;background:repeating-linear-gradient(90deg,#5a5a5a 0 1px,transparent 1px 2px);"></div>
<svg style="left:915px;top:358px;" width="13" height="12" viewBox="0 0 13 12"><rect x="0.5" y="0.5" width="12" height="11" fill="#fff" stroke="#7fa0c8"/><rect x="3" y="7" width="2" height="2" fill="#111"/><rect x="6.5" y="3.5" width="3" height="5" rx="1.5" fill="none" stroke="#111" stroke-width="1"/></svg>
<div style="left:904px;top:364px;width:10px;height:1px;background:repeating-linear-gradient(90deg,#5a5a5a 0 1px,transparent 1px 2px);"></div>
<svg style="left:915px;top:374px;" width="13" height="12" viewBox="0 0 13 12"><rect x="0.5" y="0.5" width="12" height="11" fill="#fff" stroke="#7fa0c8"/><rect x="3" y="7" width="2" height="2" fill="#111"/><rect x="6.5" y="3.5" width="3" height="5" rx="1.5" fill="none" stroke="#111" stroke-width="1"/></svg>
<div style="left:904px;top:380px;width:10px;height:1px;background:repeating-linear-gradient(90deg,#5a5a5a 0 1px,transparent 1px 2px);"></div>
<svg style="left:915px;top:390px;" width="13" height="12" viewBox="0 0 13 12"><rect x="0.5" y="0.5" width="12" height="11" fill="#fff" stroke="#7fa0c8"/><rect x="3" y="7" width="2" height="2" fill="#111"/><rect x="6.5" y="3.5" width="3" height="5" rx="1.5" fill="none" stroke="#111" stroke-width="1"/></svg>
<div style="left:904px;top:396px;width:10px;height:1px;background:repeating-linear-gradient(90deg,#5a5a5a 0 1px,transparent 1px 2px);"></div>
<svg style="left:915px;top:406px;" width="13" height="12" viewBox="0 0 13 12"><rect x="0.5" y="0.5" width="12" height="11" fill="#fff" stroke="#7fa0c8"/><rect x="3" y="7" width="2" height="2" fill="#111"/><rect x="6.5" y="3.5" width="3" height="5" rx="1.5" fill="none" stroke="#111" stroke-width="1"/></svg>
<div style="left:904px;top:412px;width:10px;height:1px;background:repeating-linear-gradient(90deg,#5a5a5a 0 1px,transparent 1px 2px);"></div>
<svg style="left:915px;top:422px;" width="13" height="12" viewBox="0 0 13 12"><rect x="0.5" y="0.5" width="12" height="11" fill="#fff" stroke="#7fa0c8"/><rect x="3" y="7" width="2" height="2" fill="#111"/><rect x="6.5" y="3.5" width="3" height="5" rx="1.5" fill="none" stroke="#111" stroke-width="1"/></svg>
<div style="left:904px;top:428px;width:10px;height:1px;background:repeating-linear-gradient(90deg,#5a5a5a 0 1px,transparent 1px 2px);"></div>
<svg style="left:915px;top:438px;" width="13" height="12" viewBox="0 0 13 12"><rect x="0.5" y="0.5" width="12" height="11" fill="#fff" stroke="#7fa0c8"/><rect x="3" y="7" width="2" height="2" fill="#111"/><rect x="6.5" y="3.5" width="3" height="5" rx="1.5" fill="none" stroke="#111" stroke-width="1"/></svg>
<div style="left:904px;top:444px;width:10px;height:1px;background:repeating-linear-gradient(90deg,#5a5a5a 0 1px,transparent 1px 2px);"></div>
<svg style="left:915px;top:454px;" width="13" height="12" viewBox="0 0 13 12"><rect x="0.5" y="0.5" width="12" height="11" fill="#fff" stroke="#7fa0c8"/><text x="6.5" y="10" text-anchor="middle" font-family="Liberation Serif" font-weight="700" font-size="10" fill="#111">A</text></svg>
<div style="left:904px;top:460px;width:10px;height:1px;background:repeating-linear-gradient(90deg,#5a5a5a 0 1px,transparent 1px 2px);"></div>
<svg style="left:915px;top:470px;" width="13" height="12" viewBox="0 0 13 12"><rect x="0.5" y="0.5" width="12" height="11" fill="#fff" stroke="#7fa0c8"/><text x="6.5" y="10" text-anchor="middle" font-family="Liberation Serif" font-weight="700" font-size="10" fill="#111">A</text></svg>
<div style="left:904px;top:476px;width:10px;height:1px;background:repeating-linear-gradient(90deg,#5a5a5a 0 1px,transparent 1px 2px);"></div>
<svg style="left:915px;top:486px;" width="13" height="12" viewBox="0 0 13 12"><rect x="0.5" y="0.5" width="12" height="11" fill="#fff" stroke="#7fa0c8"/><text x="6.5" y="10" text-anchor="middle" font-family="Liberation Serif" font-weight="700" font-size="10" fill="#111">A</text></svg>
<div style="left:904px;top:492px;width:10px;height:1px;background:repeating-linear-gradient(90deg,#5a5a5a 0 1px,transparent 1px 2px);"></div>
<svg style="left:915px;top:502px;" width="13" height="12" viewBox="0 0 13 12"><rect x="0.5" y="0.5" width="12" height="11" fill="#fff" stroke="#7fa0c8"/><text x="6.5" y="10" text-anchor="middle" font-family="Liberation Serif" font-weight="700" font-size="10" fill="#111">A</text></svg>
<div style="left:904px;top:508px;width:10px;height:1px;background:repeating-linear-gradient(90deg,#5a5a5a 0 1px,transparent 1px 2px);"></div>
<svg style="left:915px;top:518px;" width="13" height="12" viewBox="0 0 13 12"><rect x="0.5" y="0.5" width="12" height="11" fill="#fff" stroke="#7fa0c8"/><text x="6.5" y="10" text-anchor="middle" font-family="Liberation Serif" font-weight="700" font-size="10" fill="#111">A</text></svg>
<div style="left:904px;top:524px;width:10px;height:1px;background:repeating-linear-gradient(90deg,#5a5a5a 0 1px,transparent 1px 2px);"></div>
<svg style="left:915px;top:534px;" width="13" height="12" viewBox="0 0 13 12"><rect x="0.5" y="0.5" width="12" height="11" fill="#fff" stroke="#7fa0c8"/><text x="6.5" y="10" text-anchor="middle" font-family="Liberation Serif" font-weight="700" font-size="10" fill="#111">A</text></svg>
<div style="left:904px;top:540px;width:10px;height:1px;background:repeating-linear-gradient(90deg,#5a5a5a 0 1px,transparent 1px 2px);"></div>
<div style="left:884px;top:164px;width:1px;height:383px;background:repeating-linear-gradient(#5a5a5a 0 1px,transparent 1px 2px);"></div>
<div style="left:903px;top:164px;width:1px;height:377px;background:repeating-linear-gradient(#5a5a5a 0 1px,transparent 1px 2px);"></div>
<svg style="left:878px;top:552px;" width="10" height="7" viewBox="0 0 10 7"><path d="M1 1.2 L4.8 5 L8.6 1.2" stroke="#3c3c3c" stroke-width="1.6" fill="none"/></svg>
<div style="left:891px;top:556px;width:4px;height:1px;background:repeating-linear-gradient(90deg,#5a5a5a 0 1px,transparent 1px 2px);"></div>
<svg style="left:897px;top:547px;" width="12" height="15" viewBox="0 0 12 15"><defs><linearGradient id="dbg" x1="0" x2="1"><stop offset="0" stop-color="#e2b52a"/><stop offset="0.35" stop-color="#fbe58e"/><stop offset="1" stop-color="#d79a10"/></linearGradient></defs><path d="M0.5 2.5 V12.5 A5.5 2 0 0 0 11.5 12.5 V2.5" fill="url(#dbg)" stroke="#c08a18"/><ellipse cx="6" cy="2.5" rx="5.5" ry="2" fill="#fdf0b0" stroke="#c08a18"/></svg>
<svg style="left:1062px;top:170px;" width="10" height="7" viewBox="0 0 10 7"><path d="M1 5.5 L5 1.5 L9 5.5" stroke="#3c3c3c" stroke-width="1.6" fill="none"/></svg>
<svg style="left:1062px;top:551px;" width="10" height="7" viewBox="0 0 10 7"><path d="M1 1.5 L5 5.5 L9 1.5" stroke="#3c3c3c" stroke-width="1.6" fill="none"/></svg>
<svg style="left:878px;top:566px;" width="7" height="10" viewBox="0 0 7 10"><path d="M5.5 1 L1.5 5 L5.5 9" stroke="#3c3c3c" stroke-width="1.6" fill="none"/></svg>
<svg style="left:1045px;top:566px;" width="7" height="10" viewBox="0 0 7 10"><path d="M1.5 1 L5.5 5 L1.5 9" stroke="#3c3c3c" stroke-width="1.6" fill="none"/></svg>
<svg style="left:261px;top:516px;" width="7" height="10" viewBox="0 0 7 10"><path d="M5.5 1 L1.5 5 L5.5 9" stroke="#3c3c3c" stroke-width="1.6" fill="none"/></svg>
<svg style="left:850px;top:516px;" width="7" height="10" viewBox="0 0 7 10"><path d="M1.5 1 L5.5 5 L1.5 9" stroke="#3c3c3c" stroke-width="1.6" fill="none"/></svg>
<svg style="left:873px;top:590px;" width="11" height="10" viewBox="0 0 11 10"><path d="M2 5 L4.5 8 L9.5 1.5" stroke="#2f6fd0" stroke-width="1.8" fill="none"/></svg>
<div style="left:8px;top:638px;width:1069px;height:1px;background:#d8d8d8;"></div>
<div class="t" style="left:10px;top:643px;font-size:12px;line-height:12px;font-weight:700;color:#000;">Centimeters</div>
<div style="left:82px;top:640px;width:1px;height:17px;background:#d0d0d0;"></div>
<div class="t" style="left:107px;top:644px;font-size:12px;line-height:12px;font-weight:400;color:#000;">10; 20</div>
<div style="left:312px;top:640px;width:1px;height:17px;background:#d0d0d0;"></div>
<div class="t" style="left:317px;top:643px;font-size:11px;line-height:11px;font-weight:700;color:#000;">frxReport1</div>
<svg style="left:8px;top:8px;" width="20" height="20" viewBox="0 0 20 20"><g fill="none" stroke-width="1.9"><circle cx="9.2" cy="5.2" r="3.1" stroke="#1a9a50"/><circle cx="14.9" cy="8.5" r="3.1" stroke="#f0a820"/><circle cx="5.2" cy="11.3" r="3.1" stroke="#1850d8"/><circle cx="11.7" cy="14.2" r="3.1" stroke="#e84818"/></g></svg>
<svg style="left:236px;top:130px;" width="10" height="10" viewBox="0 0 10 10"><rect x="0.5" y="0.5" width="9" height="9" rx="1.5" fill="#f4f4f4" stroke="#4a0c18"/><path d="M1 1 H9 L5 5 Z" fill="#ec9c8c"/><path d="M1 1 V9 L5 5 Z" fill="#ec9c8c"/><path d="M2 2 L8 8 M8 2 L2 8" stroke="#3a3a4a" stroke-width="1.6"/><path d="M2.5 2.5 L7.5 7.5 M7.5 2.5 L2.5 7.5" stroke="#fff" stroke-width="0.7"/><rect x="0.5" y="0.5" width="9" height="9" rx="1.5" fill="none" stroke="#4a0c18"/></svg>
<svg style="left:236px;top:357px;" width="10" height="10" viewBox="0 0 10 10"><rect x="0.5" y="0.5" width="9" height="9" rx="1.5" fill="#f4f4f4" stroke="#4a0c18"/><path d="M1 1 H9 L5 5 Z" fill="#ec9c8c"/><path d="M1 1 V9 L5 5 Z" fill="#ec9c8c"/><path d="M2 2 L8 8 M8 2 L2 8" stroke="#3a3a4a" stroke-width="1.6"/><path d="M2.5 2.5 L7.5 7.5 M7.5 2.5 L2.5 7.5" stroke="#fff" stroke-width="0.7"/><rect x="0.5" y="0.5" width="9" height="9" rx="1.5" fill="none" stroke="#4a0c18"/></svg>
<svg style="left:1066px;top:130px;" width="10" height="10" viewBox="0 0 10 10"><rect x="0.5" y="0.5" width="9" height="9" rx="1.5" fill="#f4f4f4" stroke="#4a0c18"/><path d="M1 1 H9 L5 5 Z" fill="#ec9c8c"/><path d="M1 1 V9 L5 5 Z" fill="#ec9c8c"/><path d="M2 2 L8 8 M8 2 L2 8" stroke="#3a3a4a" stroke-width="1.6"/><path d="M2.5 2.5 L7.5 7.5 M7.5 2.5 L2.5 7.5" stroke="#fff" stroke-width="0.7"/><rect x="0.5" y="0.5" width="9" height="9" rx="1.5" fill="none" stroke="#4a0c18"/></svg>
<svg style="left:255px;top:539px;" width="10" height="10" viewBox="0 0 10 10"><rect x="0.5" y="0.5" width="9" height="9" rx="1.5" fill="#f4f4f4" stroke="#4a0c18"/><path d="M1 1 H9 L5 5 Z" fill="#ec9c8c"/><path d="M1 1 V9 L5 5 Z" fill="#ec9c8c"/><path d="M2 2 L8 8 M8 2 L2 8" stroke="#3a3a4a" stroke-width="1.6"/><path d="M2.5 2.5 L7.5 7.5 M7.5 2.5 L2.5 7.5" stroke="#fff" stroke-width="0.7"/><rect x="0.5" y="0.5" width="9" height="9" rx="1.5" fill="none" stroke="#4a0c18"/></svg>
<svg style="left:39px;top:130px;" width="195" height="7" viewBox="0 0 195 7"><rect x="0" y="0" width="2" height="2" fill="#fff"/><rect x="1" y="1" width="2" height="2" fill="#b8b8b8"/><rect x="0" y="4" width="2" height="2" fill="#fff"/><rect x="1" y="5" width="2" height="2" fill="#b8b8b8"/><rect x="5" y="0" width="2" height="2" fill="#fff"/><rect x="6" y="1" width="2" height="2" fill="#b8b8b8"/><rect x="5" y="4" width="2" height="2" fill="#fff"/><rect x="6" y="5" width="2" height="2" fill="#b8b8b8"/><rect x="10" y="0" width="2" height="2" fill="#fff"/><rect x="11" y="1" width="2" height="2" fill="#b8b8b8"/><rect x="10" y="4" width="2" height="2" fill="#fff"/><rect x="11" y="5" width="2" height="2" fill="#b8b8b8"/><rect x="15" y="0" width="2" height="2" fill="#fff"/><rect x="16" y="1" width="2" height="2" fill="#b8b8b8"/><rect x="15" y="4" width="2" height="2" fill="#fff"/><rect x="16" y="5" width="2" height="2" fill="#b8b8b8"/><rect x="20" y="0" width="2" height="2" fill="#fff"/><rect x="21" y="1" width="2" height="2" fill="#b8b8b8"/><rect x="20" y="4" width="2" height="2" fill="#fff"/><rect x="21" y="5" width="2" height="2" fill="#b8b8b8"/><rect x="25" y="0" width="2" height="2" fill="#fff"/><rect x="26" y="1" width="2" height="2" fill="#b8b8b8"/><rect x="25" y="4" width="2" height="2" fill="#fff"/><rect x="26" y="5" width="2" height="2" fill="#b8b8b8"/><rect x="30" y="0" width="2" height="2" fill="#fff"/><rect x="31" y="1" width="2" height="2" fill="#b8b8b8"/><rect x="30" y="4" width="2" height="2" fill="#fff"/><rect x="31" y="5" width="2" height="2" fill="#b8b8b8"/><rect x="35" y="0" width="2" height="2" fill="#fff"/><rect x="36" y="1" width="2" height="2" fill="#b8b8b8"/><rect x="35" y="4" width="2" height="2" fill="#fff"/><rect x="36" y="5" width="2" height="2" fill="#b8b8b8"/><rect x="40" y="0" width="2" height="2" fill="#fff"/><rect x="41" y="1" width="2" height="2" fill="#b8b8b8"/><rect x="40" y="4" width="2" height="2" fill="#fff"/><rect x="41" y="5" width="2" height="2" fill="#b8b8b8"/><rect x="45" y="0" width="2" height="2" fill="#fff"/><rect x="46" y="1" width="2" height="2" fill="#b8b8b8"/><rect x="45" y="4" width="2" height="2" fill="#fff"/><rect x="46" y="5" width="2" height="2" fill="#b8b8b8"/><rect x="50" y="0" width="2" height="2" fill="#fff"/><rect x="51" y="1" width="2" height="2" fill="#b8b8b8"/><rect x="50" y="4" width="2" height="2" fill="#fff"/><rect x="51" y="5" width="2" height="2" fill="#b8b8b8"/><rect x="55" y="0" width="2" height="2" fill="#fff"/><rect x="56" y="1" width="2" height="2" fill="#b8b8b8"/><rect x="55" y="4" width="2" height="2" fill="#fff"/><rect x="56" y="5" width="2" height="2" fill="#b8b8b8"/><rect x="60" y="0" width="2" height="2" fill="#fff"/><rect x="61" y="1" width="2" height="2" fill="#b8b8b8"/><rect x="60" y="4" width="2" height="2" fill="#fff"/><rect x="61" y="5" width="2" height="2" fill="#b8b8b8"/><rect x="65" y="0" width="2" height="2" fill="#fff"/><rect x="66" y="1" width="2" height="2" fill="#b8b8b8"/><rect x="65" y="4" width="2" height="2" fill="#fff"/><rect x="66" y="5" width="2" height="2" fill="#b8b8b8"/><rect x="70" y="0" width="2" height="2" fill="#fff"/><rect x="71" y="1" width="2" height="2" fill="#b8b8b8"/><rect x="70" y="4" width="2" height="2" fill="#fff"/><rect x="71" y="5" width="2" height="2" fill="#b8b8b8"/><rect x="75" y="0" width="2" height="2" fill="#fff"/><rect x="76" y="1" width="2" height="2" fill="#b8b8b8"/><rect x="75" y="4" width="2" height="2" fill="#fff"/><rect x="76" y="5" width="2" height="2" fill="#b8b8b8"/><rect x="80" y="0" width="2" height="2" fill="#fff"/><rect x="81" y="1" width="2" height="2" fill="#b8b8b8"/><rect x="80" y="4" width="2" height="2" fill="#fff"/><rect x="81" y="5" width="2" height="2" fill="#b8b8b8"/><rect x="85" y="0" width="2" height="2" fill="#fff"/><rect x="86" y="1" width="2" height="2" fill="#b8b8b8"/><rect x="85" y="4" width="2" height="2" fill="#fff"/><rect x="86" y="5" width="2" height="2" fill="#b8b8b8"/><rect x="90" y="0" width="2" height="2" fill="#fff"/><rect x="91" y="1" width="2" height="2" fill="#b8b8b8"/><rect x="90" y="4" width="2" height="2" fill="#fff"/><rect x="91" y="5" width="2" height="2" fill="#b8b8b8"/><rect x="95" y="0" width="2" height="2" fill="#fff"/><rect x="96" y="1" width="2" height="2" fill="#b8b8b8"/><rect x="95" y="4" width="2" height="2" fill="#fff"/><rect x="96" y="5" width="2" height="2" fill="#b8b8b8"/><rect x="100" y="0" width="2" height="2" fill="#fff"/><rect x="101" y="1" width="2" height="2" fill="#b8b8b8"/><rect x="100" y="4" width="2" height="2" fill="#fff"/><rect x="101" y="5" width="2" height="2" fill="#b8b8b8"/><rect x="105" y="0" width="2" height="2" fill="#fff"/><rect x="106" y="1" width="2" height="2" fill="#b8b8b8"/><rect x="105" y="4" width="2" height="2" fill="#fff"/><rect x="106" y="5" width="2" height="2" fill="#b8b8b8"/><rect x="110" y="0" width="2" height="2" fill="#fff"/><rect x="111" y="1" width="2" height="2" fill="#b8b8b8"/><rect x="110" y="4" width="2" height="2" fill="#fff"/><rect x="111" y="5" width="2" height="2" fill="#b8b8b8"/><rect x="115" y="0" width="2" height="2" fill="#fff"/><rect x="116" y="1" width="2" height="2" fill="#b8b8b8"/><rect x="115" y="4" width="2" height="2" fill="#fff"/><rect x="116" y="5" width="2" height="2" fill="#b8b8b8"/><rect x="120" y="0" width="2" height="2" fill="#fff"/><rect x="121" y="1" width="2" height="2" fill="#b8b8b8"/><rect x="120" y="4" width="2" height="2" fill="#fff"/><rect x="121" y="5" width="2" height="2" fill="#b8b8b8"/><rect x="125" y="0" width="2" height="2" fill="#fff"/><rect x="126" y="1" width="2" height="2" fill="#b8b8b8"/><rect x="125" y="4" width="2" height="2" fill="#fff"/><rect x="126" y="5" width="2" height="2" fill="#b8b8b8"/><rect x="130" y="0" width="2" height="2" fill="#fff"/><rect x="131" y="1" width="2" height="2" fill="#b8b8b8"/><rect x="130" y="4" width="2" height="2" fill="#fff"/><rect x="131" y="5" width="2" height="2" fill="#b8b8b8"/><rect x="135" y="0" width="2" height="2" fill="#fff"/><rect x="136" y="1" width="2" height="2" fill="#b8b8b8"/><rect x="135" y="4" width="2" height="2" fill="#fff"/><rect x="136" y="5" width="2" height="2" fill="#b8b8b8"/><rect x="140" y="0" width="2" height="2" fill="#fff"/><rect x="141" y="1" width="2" height="2" fill="#b8b8b8"/><rect x="140" y="4" width="2" height="2" fill="#fff"/><rect x="141" y="5" width="2" height="2" fill="#b8b8b8"/><rect x="145" y="0" width="2" height="2" fill="#fff"/><rect x="146" y="1" width="2" height="2" fill="#b8b8b8"/><rect x="145" y="4" width="2" height="2" fill="#fff"/><rect x="146" y="5" width="2" height="2" fill="#b8b8b8"/><rect x="150" y="0" width="2" height="2" fill="#fff"/><rect x="151" y="1" width="2" height="2" fill="#b8b8b8"/><rect x="150" y="4" width="2" height="2" fill="#fff"/><rect x="151" y="5" width="2" height="2" fill="#b8b8b8"/><rect x="155" y="0" width="2" height="2" fill="#fff"/><rect x="156" y="1" width="2" height="2" fill="#b8b8b8"/><rect x="155" y="4" width="2" height="2" fill="#fff"/><rect x="156" y="5" width="2" height="2" fill="#b8b8b8"/><rect x="160" y="0" width="2" height="2" fill="#fff"/><rect x="161" y="1" width="2" height="2" fill="#b8b8b8"/><rect x="160" y="4" width="2" height="2" fill="#fff"/><rect x="161" y="5" width="2" height="2" fill="#b8b8b8"/><rect x="165" y="0" width="2" height="2" fill="#fff"/><rect x="166" y="1" width="2" height="2" fill="#b8b8b8"/><rect x="165" y="4" width="2" height="2" fill="#fff"/><rect x="166" y="5" width="2" height="2" fill="#b8b8b8"/><rect x="170" y="0" width="2" height="2" fill="#fff"/><rect x="171" y="1" width="2" height="2" fill="#b8b8b8"/><rect x="170" y="4" width="2" height="2" fill="#fff"/><rect x="171" y="5" width="2" height="2" fill="#b8b8b8"/><rect x="175" y="0" width="2" height="2" fill="#fff"/><rect x="176" y="1" width="2" height="2" fill="#b8b8b8"/><rect x="175" y="4" width="2" height="2" fill="#fff"/><rect x="176" y="5" width="2" height="2" fill="#b8b8b8"/><rect x="180" y="0" width="2" height="2" fill="#fff"/><rect x="181" y="1" width="2" height="2" fill="#b8b8b8"/><rect x="180" y="4" width="2" height="2" fill="#fff"/><rect x="181" y="5" width="2" height="2" fill="#b8b8b8"/><rect x="185" y="0" width="2" height="2" fill="#fff"/><rect x="186" y="1" width="2" height="2" fill="#b8b8b8"/><rect x="185" y="4" width="2" height="2" fill="#fff"/><rect x="186" y="5" width="2" height="2" fill="#b8b8b8"/><rect x="190" y="0" width="2" height="2" fill="#fff"/><rect x="191" y="1" width="2" height="2" fill="#b8b8b8"/><rect x="190" y="4" width="2" height="2" fill="#fff"/><rect x="191" y="5" width="2" height="2" fill="#b8b8b8"/></svg>
<svg style="left:39px;top:357px;" width="195" height="7" viewBox="0 0 195 7"><rect x="0" y="0" width="2" height="2" fill="#fff"/><rect x="1" y="1" width="2" height="2" fill="#b8b8b8"/><rect x="0" y="4" width="2" height="2" fill="#fff"/><rect x="1" y="5" width="2" height="2" fill="#b8b8b8"/><rect x="5" y="0" width="2" height="2" fill="#fff"/><rect x="6" y="1" width="2" height="2" fill="#b8b8b8"/><rect x="5" y="4" width="2" height="2" fill="#fff"/><rect x="6" y="5" width="2" height="2" fill="#b8b8b8"/><rect x="10" y="0" width="2" height="2" fill="#fff"/><rect x="11" y="1" width="2" height="2" fill="#b8b8b8"/><rect x="10" y="4" width="2" height="2" fill="#fff"/><rect x="11" y="5" width="2" height="2" fill="#b8b8b8"/><rect x="15" y="0" width="2" height="2" fill="#fff"/><rect x="16" y="1" width="2" height="2" fill="#b8b8b8"/><rect x="15" y="4" width="2" height="2" fill="#fff"/><rect x="16" y="5" width="2" height="2" fill="#b8b8b8"/><rect x="20" y="0" width="2" height="2" fill="#fff"/><rect x="21" y="1" width="2" height="2" fill="#b8b8b8"/><rect x="20" y="4" width="2" height="2" fill="#fff"/><rect x="21" y="5" width="2" height="2" fill="#b8b8b8"/><rect x="25" y="0" width="2" height="2" fill="#fff"/><rect x="26" y="1" width="2" height="2" fill="#b8b8b8"/><rect x="25" y="4" width="2" height="2" fill="#fff"/><rect x="26" y="5" width="2" height="2" fill="#b8b8b8"/><rect x="30" y="0" width="2" height="2" fill="#fff"/><rect x="31" y="1" width="2" height="2" fill="#b8b8b8"/><rect x="30" y="4" width="2" height="2" fill="#fff"/><rect x="31" y="5" width="2" height="2" fill="#b8b8b8"/><rect x="35" y="0" width="2" height="2" fill="#fff"/><rect x="36" y="1" width="2" height="2" fill="#b8b8b8"/><rect x="35" y="4" width="2" height="2" fill="#fff"/><rect x="36" y="5" width="2" height="2" fill="#b8b8b8"/><rect x="40" y="0" width="2" height="2" fill="#fff"/><rect x="41" y="1" width="2" height="2" fill="#b8b8b8"/><rect x="40" y="4" width="2" height="2" fill="#fff"/><rect x="41" y="5" width="2" height="2" fill="#b8b8b8"/><rect x="45" y="0" width="2" height="2" fill="#fff"/><rect x="46" y="1" width="2" height="2" fill="#b8b8b8"/><rect x="45" y="4" width="2" height="2" fill="#fff"/><rect x="46" y="5" width="2" height="2" fill="#b8b8b8"/><rect x="50" y="0" width="2" height="2" fill="#fff"/><rect x="51" y="1" width="2" height="2" fill="#b8b8b8"/><rect x="50" y="4" width="2" height="2" fill="#fff"/><rect x="51" y="5" width="2" height="2" fill="#b8b8b8"/><rect x="55" y="0" width="2" height="2" fill="#fff"/><rect x="56" y="1" width="2" height="2" fill="#b8b8b8"/><rect x="55" y="4" width="2" height="2" fill="#fff"/><rect x="56" y="5" width="2" height="2" fill="#b8b8b8"/><rect x="60" y="0" width="2" height="2" fill="#fff"/><rect x="61" y="1" width="2" height="2" fill="#b8b8b8"/><rect x="60" y="4" width="2" height="2" fill="#fff"/><rect x="61" y="5" width="2" height="2" fill="#b8b8b8"/><rect x="65" y="0" width="2" height="2" fill="#fff"/><rect x="66" y="1" width="2" height="2" fill="#b8b8b8"/><rect x="65" y="4" width="2" height="2" fill="#fff"/><rect x="66" y="5" width="2" height="2" fill="#b8b8b8"/><rect x="70" y="0" width="2" height="2" fill="#fff"/><rect x="71" y="1" width="2" height="2" fill="#b8b8b8"/><rect x="70" y="4" width="2" height="2" fill="#fff"/><rect x="71" y="5" width="2" height="2" fill="#b8b8b8"/><rect x="75" y="0" width="2" height="2" fill="#fff"/><rect x="76" y="1" width="2" height="2" fill="#b8b8b8"/><rect x="75" y="4" width="2" height="2" fill="#fff"/><rect x="76" y="5" width="2" height="2" fill="#b8b8b8"/><rect x="80" y="0" width="2" height="2" fill="#fff"/><rect x="81" y="1" width="2" height="2" fill="#b8b8b8"/><rect x="80" y="4" width="2" height="2" fill="#fff"/><rect x="81" y="5" width="2" height="2" fill="#b8b8b8"/><rect x="85" y="0" width="2" height="2" fill="#fff"/><rect x="86" y="1" width="2" height="2" fill="#b8b8b8"/><rect x="85" y="4" width="2" height="2" fill="#fff"/><rect x="86" y="5" width="2" height="2" fill="#b8b8b8"/><rect x="90" y="0" width="2" height="2" fill="#fff"/><rect x="91" y="1" width="2" height="2" fill="#b8b8b8"/><rect x="90" y="4" width="2" height="2" fill="#fff"/><rect x="91" y="5" width="2" height="2" fill="#b8b8b8"/><rect x="95" y="0" width="2" height="2" fill="#fff"/><rect x="96" y="1" width="2" height="2" fill="#b8b8b8"/><rect x="95" y="4" width="2" height="2" fill="#fff"/><rect x="96" y="5" width="2" height="2" fill="#b8b8b8"/><rect x="100" y="0" width="2" height="2" fill="#fff"/><rect x="101" y="1" width="2" height="2" fill="#b8b8b8"/><rect x="100" y="4" width="2" height="2" fill="#fff"/><rect x="101" y="5" width="2" height="2" fill="#b8b8b8"/><rect x="105" y="0" width="2" height="2" fill="#fff"/><rect x="106" y="1" width="2" height="2" fill="#b8b8b8"/><rect x="105" y="4" width="2" height="2" fill="#fff"/><rect x="106" y="5" width="2" height="2" fill="#b8b8b8"/><rect x="110" y="0" width="2" height="2" fill="#fff"/><rect x="111" y="1" width="2" height="2" fill="#b8b8b8"/><rect x="110" y="4" width="2" height="2" fill="#fff"/><rect x="111" y="5" width="2" height="2" fill="#b8b8b8"/><rect x="115" y="0" width="2" height="2" fill="#fff"/><rect x="116" y="1" width="2" height="2" fill="#b8b8b8"/><rect x="115" y="4" width="2" height="2" fill="#fff"/><rect x="116" y="5" width="2" height="2" fill="#b8b8b8"/><rect x="120" y="0" width="2" height="2" fill="#fff"/><rect x="121" y="1" width="2" height="2" fill="#b8b8b8"/><rect x="120" y="4" width="2" height="2" fill="#fff"/><rect x="121" y="5" width="2" height="2" fill="#b8b8b8"/><rect x="125" y="0" width="2" height="2" fill="#fff"/><rect x="126" y="1" width="2" height="2" fill="#b8b8b8"/><rect x="125" y="4" width="2" height="2" fill="#fff"/><rect x="126" y="5" width="2" height="2" fill="#b8b8b8"/><rect x="130" y="0" width="2" height="2" fill="#fff"/><rect x="131" y="1" width="2" height="2" fill="#b8b8b8"/><rect x="130" y="4" width="2" height="2" fill="#fff"/><rect x="131" y="5" width="2" height="2" fill="#b8b8b8"/><rect x="135" y="0" width="2" height="2" fill="#fff"/><rect x="136" y="1" width="2" height="2" fill="#b8b8b8"/><rect x="135" y="4" width="2" height="2" fill="#fff"/><rect x="136" y="5" width="2" height="2" fill="#b8b8b8"/><rect x="140" y="0" width="2" height="2" fill="#fff"/><rect x="141" y="1" width="2" height="2" fill="#b8b8b8"/><rect x="140" y="4" width="2" height="2" fill="#fff"/><rect x="141" y="5" width="2" height="2" fill="#b8b8b8"/><rect x="145" y="0" width="2" height="2" fill="#fff"/><rect x="146" y="1" width="2" height="2" fill="#b8b8b8"/><rect x="145" y="4" width="2" height="2" fill="#fff"/><rect x="146" y="5" width="2" height="2" fill="#b8b8b8"/><rect x="150" y="0" width="2" height="2" fill="#fff"/><rect x="151" y="1" width="2" height="2" fill="#b8b8b8"/><rect x="150" y="4" width="2" height="2" fill="#fff"/><rect x="151" y="5" width="2" height="2" fill="#b8b8b8"/><rect x="155" y="0" width="2" height="2" fill="#fff"/><rect x="156" y="1" width="2" height="2" fill="#b8b8b8"/><rect x="155" y="4" width="2" height="2" fill="#fff"/><rect x="156" y="5" width="2" height="2" fill="#b8b8b8"/><rect x="160" y="0" width="2" height="2" fill="#fff"/><rect x="161" y="1" width="2" height="2" fill="#b8b8b8"/><rect x="160" y="4" width="2" height="2" fill="#fff"/><rect x="161" y="5" width="2" height="2" fill="#b8b8b8"/><rect x="165" y="0" width="2" height="2" fill="#fff"/><rect x="166" y="1" width="2" height="2" fill="#b8b8b8"/><rect x="165" y="4" width="2" height="2" fill="#fff"/><rect x="166" y="5" width="2" height="2" fill="#b8b8b8"/><rect x="170" y="0" width="2" height="2" fill="#fff"/><rect x="171" y="1" width="2" height="2" fill="#b8b8b8"/><rect x="170" y="4" width="2" height="2" fill="#fff"/><rect x="171" y="5" width="2" height="2" fill="#b8b8b8"/><rect x="175" y="0" width="2" height="2" fill="#fff"/><rect x="176" y="1" width="2" height="2" fill="#b8b8b8"/><rect x="175" y="4" width="2" height="2" fill="#fff"/><rect x="176" y="5" width="2" height="2" fill="#b8b8b8"/><rect x="180" y="0" width="2" height="2" fill="#fff"/><rect x="181" y="1" width="2" height="2" fill="#b8b8b8"/><rect x="180" y="4" width="2" height="2" fill="#fff"/><rect x="181" y="5" width="2" height="2" fill="#b8b8b8"/><rect x="185" y="0" width="2" height="2" fill="#fff"/><rect x="186" y="1" width="2" height="2" fill="#b8b8b8"/><rect x="185" y="4" width="2" height="2" fill="#fff"/><rect x="186" y="5" width="2" height="2" fill="#b8b8b8"/><rect x="190" y="0" width="2" height="2" fill="#fff"/><rect x="191" y="1" width="2" height="2" fill="#b8b8b8"/><rect x="190" y="4" width="2" height="2" fill="#fff"/><rect x="191" y="5" width="2" height="2" fill="#b8b8b8"/></svg>
<svg style="left:874px;top:130px;" width="190" height="7" viewBox="0 0 190 7"><rect x="0" y="0" width="2" height="2" fill="#fff"/><rect x="1" y="1" width="2" height="2" fill="#b8b8b8"/><rect x="0" y="4" width="2" height="2" fill="#fff"/><rect x="1" y="5" width="2" height="2" fill="#b8b8b8"/><rect x="5" y="0" width="2" height="2" fill="#fff"/><rect x="6" y="1" width="2" height="2" fill="#b8b8b8"/><rect x="5" y="4" width="2" height="2" fill="#fff"/><rect x="6" y="5" width="2" height="2" fill="#b8b8b8"/><rect x="10" y="0" width="2" height="2" fill="#fff"/><rect x="11" y="1" width="2" height="2" fill="#b8b8b8"/><rect x="10" y="4" width="2" height="2" fill="#fff"/><rect x="11" y="5" width="2" height="2" fill="#b8b8b8"/><rect x="15" y="0" width="2" height="2" fill="#fff"/><rect x="16" y="1" width="2" height="2" fill="#b8b8b8"/><rect x="15" y="4" width="2" height="2" fill="#fff"/><rect x="16" y="5" width="2" height="2" fill="#b8b8b8"/><rect x="20" y="0" width="2" height="2" fill="#fff"/><rect x="21" y="1" width="2" height="2" fill="#b8b8b8"/><rect x="20" y="4" width="2" height="2" fill="#fff"/><rect x="21" y="5" width="2" height="2" fill="#b8b8b8"/><rect x="25" y="0" width="2" height="2" fill="#fff"/><rect x="26" y="1" width="2" height="2" fill="#b8b8b8"/><rect x="25" y="4" width="2" height="2" fill="#fff"/><rect x="26" y="5" width="2" height="2" fill="#b8b8b8"/><rect x="30" y="0" width="2" height="2" fill="#fff"/><rect x="31" y="1" width="2" height="2" fill="#b8b8b8"/><rect x="30" y="4" width="2" height="2" fill="#fff"/><rect x="31" y="5" width="2" height="2" fill="#b8b8b8"/><rect x="35" y="0" width="2" height="2" fill="#fff"/><rect x="36" y="1" width="2" height="2" fill="#b8b8b8"/><rect x="35" y="4" width="2" height="2" fill="#fff"/><rect x="36" y="5" width="2" height="2" fill="#b8b8b8"/><rect x="40" y="0" width="2" height="2" fill="#fff"/><rect x="41" y="1" width="2" height="2" fill="#b8b8b8"/><rect x="40" y="4" width="2" height="2" fill="#fff"/><rect x="41" y="5" width="2" height="2" fill="#b8b8b8"/><rect x="45" y="0" width="2" height="2" fill="#fff"/><rect x="46" y="1" width="2" height="2" fill="#b8b8b8"/><rect x="45" y="4" width="2" height="2" fill="#fff"/><rect x="46" y="5" width="2" height="2" fill="#b8b8b8"/><rect x="50" y="0" width="2" height="2" fill="#fff"/><rect x="51" y="1" width="2" height="2" fill="#b8b8b8"/><rect x="50" y="4" width="2" height="2" fill="#fff"/><rect x="51" y="5" width="2" height="2" fill="#b8b8b8"/><rect x="55" y="0" width="2" height="2" fill="#fff"/><rect x="56" y="1" width="2" height="2" fill="#b8b8b8"/><rect x="55" y="4" width="2" height="2" fill="#fff"/><rect x="56" y="5" width="2" height="2" fill="#b8b8b8"/><rect x="60" y="0" width="2" height="2" fill="#fff"/><rect x="61" y="1" width="2" height="2" fill="#b8b8b8"/><rect x="60" y="4" width="2" height="2" fill="#fff"/><rect x="61" y="5" width="2" height="2" fill="#b8b8b8"/><rect x="65" y="0" width="2" height="2" fill="#fff"/><rect x="66" y="1" width="2" height="2" fill="#b8b8b8"/><rect x="65" y="4" width="2" height="2" fill="#fff"/><rect x="66" y="5" width="2" height="2" fill="#b8b8b8"/><rect x="70" y="0" width="2" height="2" fill="#fff"/><rect x="71" y="1" width="2" height="2" fill="#b8b8b8"/><rect x="70" y="4" width="2" height="2" fill="#fff"/><rect x="71" y="5" width="2" height="2" fill="#b8b8b8"/><rect x="75" y="0" width="2" height="2" fill="#fff"/><rect x="76" y="1" width="2" height="2" fill="#b8b8b8"/><rect x="75" y="4" width="2" height="2" fill="#fff"/><rect x="76" y="5" width="2" height="2" fill="#b8b8b8"/><rect x="80" y="0" width="2" height="2" fill="#fff"/><rect x="81" y="1" width="2" height="2" fill="#b8b8b8"/><rect x="80" y="4" width="2" height="2" fill="#fff"/><rect x="81" y="5" width="2" height="2" fill="#b8b8b8"/><rect x="85" y="0" width="2" height="2" fill="#fff"/><rect x="86" y="1" width="2" height="2" fill="#b8b8b8"/><rect x="85" y="4" width="2" height="2" fill="#fff"/><rect x="86" y="5" width="2" height="2" fill="#b8b8b8"/><rect x="90" y="0" width="2" height="2" fill="#fff"/><rect x="91" y="1" width="2" height="2" fill="#b8b8b8"/><rect x="90" y="4" width="2" height="2" fill="#fff"/><rect x="91" y="5" width="2" height="2" fill="#b8b8b8"/><rect x="95" y="0" width="2" height="2" fill="#fff"/><rect x="96" y="1" width="2" height="2" fill="#b8b8b8"/><rect x="95" y="4" width="2" height="2" fill="#fff"/><rect x="96" y="5" width="2" height="2" fill="#b8b8b8"/><rect x="100" y="0" width="2" height="2" fill="#fff"/><rect x="101" y="1" width="2" height="2" fill="#b8b8b8"/><rect x="100" y="4" width="2" height="2" fill="#fff"/><rect x="101" y="5" width="2" height="2" fill="#b8b8b8"/><rect x="105" y="0" width="2" height="2" fill="#fff"/><rect x="106" y="1" width="2" height="2" fill="#b8b8b8"/><rect x="105" y="4" width="2" height="2" fill="#fff"/><rect x="106" y="5" width="2" height="2" fill="#b8b8b8"/><rect x="110" y="0" width="2" height="2" fill="#fff"/><rect x="111" y="1" width="2" height="2" fill="#b8b8b8"/><rect x="110" y="4" width="2" height="2" fill="#fff"/><rect x="111" y="5" width="2" height="2" fill="#b8b8b8"/><rect x="115" y="0" width="2" height="2" fill="#fff"/><rect x="116" y="1" width="2" height="2" fill="#b8b8b8"/><rect x="115" y="4" width="2" height="2" fill="#fff"/><rect x="116" y="5" width="2" height="2" fill="#b8b8b8"/><rect x="120" y="0" width="2" height="2" fill="#fff"/><rect x="121" y="1" width="2" height="2" fill="#b8b8b8"/><rect x="120" y="4" width="2" height="2" fill="#fff"/><rect x="121" y="5" width="2" height="2" fill="#b8b8b8"/><rect x="125" y="0" width="2" height="2" fill="#fff"/><rect x="126" y="1" width="2" height="2" fill="#b8b8b8"/><rect x="125" y="4" width="2" height="2" fill="#fff"/><rect x="126" y="5" width="2" height="2" fill="#b8b8b8"/><rect x="130" y="0" width="2" height="2" fill="#fff"/><rect x="131" y="1" width="2" height="2" fill="#b8b8b8"/><rect x="130" y="4" width="2" height="2" fill="#fff"/><rect x="131" y="5" width="2" height="2" fill="#b8b8b8"/><rect x="135" y="0" width="2" height="2" fill="#fff"/><rect x="136" y="1" width="2" height="2" fill="#b8b8b8"/><rect x="135" y="4" width="2" height="2" fill="#fff"/><rect x="136" y="5" width="2" height="2" fill="#b8b8b8"/><rect x="140" y="0" width="2" height="2" fill="#fff"/><rect x="141" y="1" width="2" height="2" fill="#b8b8b8"/><rect x="140" y="4" width="2" height="2" fill="#fff"/><rect x="141" y="5" width="2" height="2" fill="#b8b8b8"/><rect x="145" y="0" width="2" height="2" fill="#fff"/><rect x="146" y="1" width="2" height="2" fill="#b8b8b8"/><rect x="145" y="4" width="2" height="2" fill="#fff"/><rect x="146" y="5" width="2" height="2" fill="#b8b8b8"/><rect x="150" y="0" width="2" height="2" fill="#fff"/><rect x="151" y="1" width="2" height="2" fill="#b8b8b8"/><rect x="150" y="4" width="2" height="2" fill="#fff"/><rect x="151" y="5" width="2" height="2" fill="#b8b8b8"/><rect x="155" y="0" width="2" height="2" fill="#fff"/><rect x="156" y="1" width="2" height="2" fill="#b8b8b8"/><rect x="155" y="4" width="2" height="2" fill="#fff"/><rect x="156" y="5" width="2" height="2" fill="#b8b8b8"/><rect x="160" y="0" width="2" height="2" fill="#fff"/><rect x="161" y="1" width="2" height="2" fill="#b8b8b8"/><rect x="160" y="4" width="2" height="2" fill="#fff"/><rect x="161" y="5" width="2" height="2" fill="#b8b8b8"/><rect x="165" y="0" width="2" height="2" fill="#fff"/><rect x="166" y="1" width="2" height="2" fill="#b8b8b8"/><rect x="165" y="4" width="2" height="2" fill="#fff"/><rect x="166" y="5" width="2" height="2" fill="#b8b8b8"/><rect x="170" y="0" width="2" height="2" fill="#fff"/><rect x="171" y="1" width="2" height="2" fill="#b8b8b8"/><rect x="170" y="4" width="2" height="2" fill="#fff"/><rect x="171" y="5" width="2" height="2" fill="#b8b8b8"/><rect x="175" y="0" width="2" height="2" fill="#fff"/><rect x="176" y="1" width="2" height="2" fill="#b8b8b8"/><rect x="175" y="4" width="2" height="2" fill="#fff"/><rect x="176" y="5" width="2" height="2" fill="#b8b8b8"/><rect x="180" y="0" width="2" height="2" fill="#fff"/><rect x="181" y="1" width="2" height="2" fill="#b8b8b8"/><rect x="180" y="4" width="2" height="2" fill="#fff"/><rect x="181" y="5" width="2" height="2" fill="#b8b8b8"/><rect x="185" y="0" width="2" height="2" fill="#fff"/><rect x="186" y="1" width="2" height="2" fill="#b8b8b8"/><rect x="185" y="4" width="2" height="2" fill="#fff"/><rect x="186" y="5" width="2" height="2" fill="#b8b8b8"/></svg>
<svg style="left:256px;top:552px;" width="7" height="85" viewBox="0 0 7 85"><rect x="0" y="0" width="2" height="2" fill="#fff"/><rect x="1" y="1" width="2" height="2" fill="#b8b8b8"/><rect x="4" y="0" width="2" height="2" fill="#fff"/><rect x="5" y="1" width="2" height="2" fill="#b8b8b8"/><rect x="0" y="5" width="2" height="2" fill="#fff"/><rect x="1" y="6" width="2" height="2" fill="#b8b8b8"/><rect x="4" y="5" width="2" height="2" fill="#fff"/><rect x="5" y="6" width="2" height="2" fill="#b8b8b8"/><rect x="0" y="10" width="2" height="2" fill="#fff"/><rect x="1" y="11" width="2" height="2" fill="#b8b8b8"/><rect x="4" y="10" width="2" height="2" fill="#fff"/><rect x="5" y="11" width="2" height="2" fill="#b8b8b8"/><rect x="0" y="15" width="2" height="2" fill="#fff"/><rect x="1" y="16" width="2" height="2" fill="#b8b8b8"/><rect x="4" y="15" width="2" height="2" fill="#fff"/><rect x="5" y="16" width="2" height="2" fill="#b8b8b8"/><rect x="0" y="20" width="2" height="2" fill="#fff"/><rect x="1" y="21" width="2" height="2" fill="#b8b8b8"/><rect x="4" y="20" width="2" height="2" fill="#fff"/><rect x="5" y="21" width="2" height="2" fill="#b8b8b8"/><rect x="0" y="25" width="2" height="2" fill="#fff"/><rect x="1" y="26" width="2" height="2" fill="#b8b8b8"/><rect x="4" y="25" width="2" height="2" fill="#fff"/><rect x="5" y="26" width="2" height="2" fill="#b8b8b8"/><rect x="0" y="30" width="2" height="2" fill="#fff"/><rect x="1" y="31" width="2" height="2" fill="#b8b8b8"/><rect x="4" y="30" width="2" height="2" fill="#fff"/><rect x="5" y="31" width="2" height="2" fill="#b8b8b8"/><rect x="0" y="35" width="2" height="2" fill="#fff"/><rect x="1" y="36" width="2" height="2" fill="#b8b8b8"/><rect x="4" y="35" width="2" height="2" fill="#fff"/><rect x="5" y="36" width="2" height="2" fill="#b8b8b8"/><rect x="0" y="40" width="2" height="2" fill="#fff"/><rect x="1" y="41" width="2" height="2" fill="#b8b8b8"/><rect x="4" y="40" width="2" height="2" fill="#fff"/><rect x="5" y="41" width="2" height="2" fill="#b8b8b8"/><rect x="0" y="45" width="2" height="2" fill="#fff"/><rect x="1" y="46" width="2" height="2" fill="#b8b8b8"/><rect x="4" y="45" width="2" height="2" fill="#fff"/><rect x="5" y="46" width="2" height="2" fill="#b8b8b8"/><rect x="0" y="50" width="2" height="2" fill="#fff"/><rect x="1" y="51" width="2" height="2" fill="#b8b8b8"/><rect x="4" y="50" width="2" height="2" fill="#fff"/><rect x="5" y="51" width="2" height="2" fill="#b8b8b8"/><rect x="0" y="55" width="2" height="2" fill="#fff"/><rect x="1" y="56" width="2" height="2" fill="#b8b8b8"/><rect x="4" y="55" width="2" height="2" fill="#fff"/><rect x="5" y="56" width="2" height="2" fill="#b8b8b8"/><rect x="0" y="60" width="2" height="2" fill="#fff"/><rect x="1" y="61" width="2" height="2" fill="#b8b8b8"/><rect x="4" y="60" width="2" height="2" fill="#fff"/><rect x="5" y="61" width="2" height="2" fill="#b8b8b8"/><rect x="0" y="65" width="2" height="2" fill="#fff"/><rect x="1" y="66" width="2" height="2" fill="#b8b8b8"/><rect x="4" y="65" width="2" height="2" fill="#fff"/><rect x="5" y="66" width="2" height="2" fill="#b8b8b8"/><rect x="0" y="70" width="2" height="2" fill="#fff"/><rect x="1" y="71" width="2" height="2" fill="#b8b8b8"/><rect x="4" y="70" width="2" height="2" fill="#fff"/><rect x="5" y="71" width="2" height="2" fill="#b8b8b8"/><rect x="0" y="75" width="2" height="2" fill="#fff"/><rect x="1" y="76" width="2" height="2" fill="#b8b8b8"/><rect x="4" y="75" width="2" height="2" fill="#fff"/><rect x="5" y="76" width="2" height="2" fill="#b8b8b8"/><rect x="0" y="80" width="2" height="2" fill="#fff"/><rect x="1" y="81" width="2" height="2" fill="#b8b8b8"/><rect x="4" y="80" width="2" height="2" fill="#fff"/><rect x="5" y="81" width="2" height="2" fill="#b8b8b8"/></svg>
<svg style="left:248px;top:373px;" width="4" height="28" viewBox="0 0 4 28"><rect x="0" y="0" width="3" height="3" rx="1" fill="#fff"/><rect x="1" y="1" width="2" height="2" fill="#808080"/><rect x="0" y="4" width="3" height="3" rx="1" fill="#fff"/><rect x="1" y="5" width="2" height="2" fill="#808080"/><rect x="0" y="8" width="3" height="3" rx="1" fill="#fff"/><rect x="1" y="9" width="2" height="2" fill="#808080"/><rect x="0" y="12" width="3" height="3" rx="1" fill="#fff"/><rect x="1" y="13" width="2" height="2" fill="#808080"/><rect x="0" y="16" width="3" height="3" rx="1" fill="#fff"/><rect x="1" y="17" width="2" height="2" fill="#808080"/><rect x="0" y="20" width="3" height="3" rx="1" fill="#fff"/><rect x="1" y="21" width="2" height="2" fill="#808080"/><rect x="0" y="24" width="3" height="3" rx="1" fill="#fff"/><rect x="1" y="25" width="2" height="2" fill="#808080"/></svg>
<svg style="left:866px;top:373px;" width="4" height="28" viewBox="0 0 4 28"><rect x="0" y="0" width="3" height="3" rx="1" fill="#fff"/><rect x="1" y="1" width="2" height="2" fill="#808080"/><rect x="0" y="4" width="3" height="3" rx="1" fill="#fff"/><rect x="1" y="5" width="2" height="2" fill="#808080"/><rect x="0" y="8" width="3" height="3" rx="1" fill="#fff"/><rect x="1" y="9" width="2" height="2" fill="#808080"/><rect x="0" y="12" width="3" height="3" rx="1" fill="#fff"/><rect x="1" y="13" width="2" height="2" fill="#808080"/><rect x="0" y="16" width="3" height="3" rx="1" fill="#fff"/><rect x="1" y="17" width="2" height="2" fill="#808080"/><rect x="0" y="20" width="3" height="3" rx="1" fill="#fff"/><rect x="1" y="21" width="2" height="2" fill="#808080"/><rect x="0" y="24" width="3" height="3" rx="1" fill="#fff"/><rect x="1" y="25" width="2" height="2" fill="#808080"/></svg>
<svg style="left:549px;top:532px;" width="28" height="4" viewBox="0 0 28 4"><rect x="0" y="0" width="3" height="3" rx="1" fill="#fff"/><rect x="1" y="1" width="2" height="2" fill="#808080"/><rect x="4" y="0" width="3" height="3" rx="1" fill="#fff"/><rect x="5" y="1" width="2" height="2" fill="#808080"/><rect x="8" y="0" width="3" height="3" rx="1" fill="#fff"/><rect x="9" y="1" width="2" height="2" fill="#808080"/><rect x="12" y="0" width="3" height="3" rx="1" fill="#fff"/><rect x="13" y="1" width="2" height="2" fill="#808080"/><rect x="16" y="0" width="3" height="3" rx="1" fill="#fff"/><rect x="17" y="1" width="2" height="2" fill="#808080"/><rect x="20" y="0" width="3" height="3" rx="1" fill="#fff"/><rect x="21" y="1" width="2" height="2" fill="#808080"/><rect x="24" y="0" width="3" height="3" rx="1" fill="#fff"/><rect x="25" y="1" width="2" height="2" fill="#808080"/></svg>
<svg style="left:22px;top:56px;" width="15" height="17" viewBox="0 0 15 17"><defs><linearGradient id="g1" x1="0" y1="0" x2="1" y2="1"><stop offset="0" stop-color="#ffffff"/><stop offset="1" stop-color="#cfd8ec"/></linearGradient></defs><path d="M1.5 1.5 H9.5 L13.5 5.5 V15.5 H1.5 Z" fill="url(#g1)" stroke="#3f5580"/><path d="M10.5 1.5 V5.5 H13.5" fill="none" stroke="#3f5580"/></svg>
<svg style="left:44px;top:55px;" width="18" height="17" viewBox="0 0 18 17"><defs><linearGradient id="fo" x1="0" y1="0" x2="0" y2="1"><stop offset="0" stop-color="#f8d878"/><stop offset="1" stop-color="#e8a818"/></linearGradient></defs><path d="M1.5 5.5 H6 L7.5 7 H13.5 V15.5 H1.5 Z" fill="url(#fo)" stroke="#c8701c"/><path d="M1.5 15.5 L3.5 9.5 H15.5 L13.5 15.5 Z" fill="#f6c33c" stroke="#c8701c"/><path d="M10 4 Q13 0.5 16 3" fill="none" stroke="#34508a" stroke-width="1.2"/><path d="M15 1.5 L17 4 L14 4.5 Z" fill="#34508a"/></svg>
<svg style="left:67px;top:55px;" width="18" height="18" viewBox="0 0 18 18"><rect x="1.5" y="1.5" width="15" height="15" rx="1.5" fill="#6c9ae2" stroke="#3a5ca4"/><rect x="4" y="2" width="10" height="5" fill="#f0f4fc"/><rect x="6" y="3" width="1.5" height="3" fill="#3a5ca4"/><rect x="4" y="10" width="10" height="6" fill="#fff"/><rect x="5" y="11" width="8" height="1.5" fill="#7cc050"/><rect x="5" y="13.5" width="8" height="1.5" fill="#7cc050"/></svg>
<svg style="left:90px;top:55px;" width="18" height="18" viewBox="0 0 18 18"><defs><linearGradient id="g2" x1="0" y1="0" x2="1" y2="1"><stop offset="0" stop-color="#ffffff"/><stop offset="1" stop-color="#cfd8ec"/></linearGradient></defs><path d="M1.5 1.5 H13.5 L13.5 1.5 V15.5 H1.5 Z" fill="url(#g2)" stroke="#3f5580"/><circle cx="9" cy="9" r="4.5" fill="#cfe4fa" stroke="#9cc0e8"/><path d="M12 12 L16 16" stroke="#c88a48" stroke-width="2.2"/></svg>
<svg style="left:121px;top:55px;" width="17" height="18" viewBox="0 0 17 18"><defs><linearGradient id="g3" x1="0" y1="0" x2="1" y2="1"><stop offset="0" stop-color="#ffffff"/><stop offset="1" stop-color="#cfd8ec"/></linearGradient></defs><path d="M2.5 2.5 H14.5 L14.5 2.5 V16.5 H2.5 Z" fill="url(#g3)" stroke="#3f5580"/><g transform="translate(1,1)"><rect x="0" y="0" width="7" height="7" fill="#f6e27a" opacity="0.9"/><path d="M3.5 0 V7 M0 3.5 H7 M1 1 L6 6 M6 1 L1 6" stroke="#e0b020" stroke-width="0.8"/><circle cx="3.5" cy="3.5" r="1.5" fill="#fff"/></g></svg>
<svg style="left:144px;top:55px;" width="18" height="18" viewBox="0 0 18 18"><rect x="2.5" y="3.5" width="14" height="12" rx="1" fill="#fff" stroke="#3f5580"/><rect x="3" y="4" width="13" height="2" fill="#6c9ae2"/><rect x="5" y="8" width="2" height="1" fill="#3a6ad0"/><rect x="8.5" y="7.5" width="6" height="2.5" fill="none" stroke="#9aa4b4"/><rect x="5" y="12" width="2" height="1" fill="#3a6ad0"/><rect x="8.5" y="11.5" width="6" height="2.5" fill="none" stroke="#9aa4b4"/><g transform="translate(1,1)"><rect x="0" y="0" width="7" height="7" fill="#f6e27a" opacity="0.9"/><path d="M3.5 0 V7 M0 3.5 H7 M1 1 L6 6 M6 1 L1 6" stroke="#e0b020" stroke-width="0.8"/><circle cx="3.5" cy="3.5" r="1.5" fill="#fff"/></g></svg>
<svg style="left:169px;top:55px;" width="16" height="18" viewBox="0 0 16 18"><rect x="1.5" y="2.5" width="13" height="14" fill="#e4e4e4" stroke="#c4c4c4"/><path d="M2 1 L10 10 M9 2 L4 9" stroke="#b0b0b0" stroke-width="1.3"/></svg>
<svg style="left:190px;top:55px;" width="17" height="18" viewBox="0 0 17 18"><rect x="2.5" y="2.5" width="13" height="14" fill="#e4e4e4" stroke="#c4c4c4"/><path d="M4 15 L11 7" stroke="#c0c0c0" stroke-width="2.5"/><circle cx="12" cy="6" r="2.5" fill="none" stroke="#c0c0c0" stroke-width="1.5"/></svg>
<svg style="left:222px;top:55px;" width="16" height="17" viewBox="0 0 16 17"><path d="M6 12 L12 1 M8 12 L6 1" stroke="#9ab4d4" stroke-width="1.2"/><circle cx="4.5" cy="13" r="2.3" fill="none" stroke="#d83030" stroke-width="1.6"/><circle cx="9" cy="14" r="2.3" fill="none" stroke="#d83030" stroke-width="1.6"/></svg>
<svg style="left:244px;top:55px;" width="18" height="18" viewBox="0 0 18 18"><defs><linearGradient id="g4" x1="0" y1="0" x2="1" y2="1"><stop offset="0" stop-color="#ffffff"/><stop offset="1" stop-color="#cfd8ec"/></linearGradient></defs><path d="M1.5 1.5 H6.5 L9.5 4.5 V11.5 H1.5 Z" fill="url(#g4)" stroke="#3f5580"/><defs><linearGradient id="g5" x1="0" y1="0" x2="1" y2="1"><stop offset="0" stop-color="#ffffff"/><stop offset="1" stop-color="#cfd8ec"/></linearGradient></defs><path d="M7.5 5.5 H13.5 L16.5 8.5 V16.5 H7.5 Z" fill="url(#g5)" stroke="#3f5580"/></svg>
<svg style="left:267px;top:55px;" width="18" height="18" viewBox="0 0 18 18"><rect x="1.5" y="2.5" width="11" height="13" rx="1.5" fill="#e0a040" stroke="#b07020"/><rect x="4" y="1" width="6" height="3" fill="#f0d080" stroke="#b07020" stroke-width="0.8"/><defs><linearGradient id="g6" x1="0" y1="0" x2="1" y2="1"><stop offset="0" stop-color="#ffffff"/><stop offset="1" stop-color="#cfd8ec"/></linearGradient></defs><path d="M7.5 5.5 H13.5 L16.5 8.5 V16.5 H7.5 Z" fill="url(#g6)" stroke="#3f5580"/></svg>
<svg style="left:300px;top:56px;" width="15" height="16" viewBox="0 0 15 16"><path d="M4 4 Q12 0 12.5 7 Q12.5 12 8 14" fill="none" stroke="#5a8ee6" stroke-width="2.3"/><path d="M0.5 5.5 L6 1.5 L6.5 8.5 Z" fill="#5a8ee6"/></svg>
<svg style="left:322px;top:56px;" width="15" height="16" viewBox="0 0 15 16"><path d="M11 4 Q3 0 2.5 7 Q2.5 12 7 14" fill="none" stroke="#cdcdcd" stroke-width="2.3"/><path d="M14.5 5.5 L9 1.5 L8.5 8.5 Z" fill="#cdcdcd"/></svg>
<svg style="left:352px;top:55px;" width="18" height="18" viewBox="0 0 18 18"><rect x="4" y="4" width="8" height="7" fill="#dcdcdc"/><rect x="7.5" y="7.5" width="7" height="7" fill="#ececec" stroke="#b4b4b4" stroke-width="1.2"/><g fill="#f0f0f0" stroke="#b4b4b4" stroke-width="1.1"><circle cx="3" cy="3" r="1.6"/><circle cx="15" cy="3" r="1.6"/><circle cx="3" cy="15" r="1.6"/><circle cx="15" cy="15" r="1.6"/></g></svg>
<svg style="left:375px;top:55px;" width="18" height="18" viewBox="0 0 18 18"><rect x="3" y="3" width="8" height="7" fill="#dcdcdc"/><rect x="8.5" y="8.5" width="8" height="7" fill="#ececec" stroke="#b4b4b4" stroke-width="1.2"/><g fill="#f0f0f0" stroke="#b4b4b4" stroke-width="1.1"><circle cx="3" cy="3" r="1.6"/><circle cx="11" cy="3" r="1.6"/><circle cx="3" cy="11" r="1.6"/><circle cx="8.5" cy="8.5" r="1.6"/><circle cx="16.5" cy="8.5" r="1.6"/><circle cx="8.5" cy="16" r="1.6"/><circle cx="16.5" cy="16" r="1.6"/></g></svg>
<svg style="left:477px;top:56px;" width="16" height="16" viewBox="0 0 16 16"><g stroke="#303030" stroke-width="1.2"><path d="M3.5 1 V15"/><path d="M1 3.5 H15"/><path d="M6.5 1 V15"/><path d="M1 6.5 H15"/><path d="M9.5 1 V15"/><path d="M1 9.5 H15"/><path d="M12.5 1 V15"/><path d="M1 12.5 H15"/></g></svg>
<svg style="left:499px;top:56px;" width="17" height="16" viewBox="0 0 17 16"><defs><linearGradient id="fg" x1="0" y1="0" x2="1" y2="1"><stop offset="0" stop-color="#c8dcfa"/><stop offset="1" stop-color="#5a8ee6"/></linearGradient></defs><rect x="5" y="5" width="7" height="7" fill="url(#fg)"/><g stroke="#303030" stroke-width="1.2"><path d="M4.5 1 V16 M12.5 1 V16 M1 4.5 H16 M1 12.5 H16"/></g><path d="M6.5 1 H10.5 L8.5 3 Z M1 6.5 V10.5 L3 8.5 Z" fill="#404040"/></svg>
<svg style="left:521px;top:56px;" width="17" height="16" viewBox="0 0 17 16"><rect x="5" y="5" width="7" height="7" fill="#d8d8d8"/><path d="M5 12 L12 5" stroke="#f4f4f4"/><g stroke="#b8b8b8" stroke-width="1.2"><path d="M4.5 1 V16 M12.5 1 V16 M1 4.5 H16 M1 12.5 H16"/></g></svg>
<svg style="left:553px;top:56px;" width="17" height="17" viewBox="0 0 17 17"><path d="M1.5 2 V15" stroke="#222"/><rect x="3" y="3" width="9" height="5" fill="#b4d0f8" stroke="#7aa2e2" stroke-width="0.8"/><rect x="3" y="9" width="12" height="5" fill="#6a9ae4" stroke="#7aa2e2" stroke-width="0.8"/></svg>
<svg style="left:576px;top:56px;" width="17" height="17" viewBox="0 0 17 17"><rect x="3" y="3" width="9" height="5" fill="#b4d0f8" stroke="#7aa2e2" stroke-width="0.8"/><rect x="1" y="9" width="13" height="5" fill="#6a9ae4" stroke="#7aa2e2" stroke-width="0.8"/><path d="M7.5 1 V3 M7.5 8 V9 M7.5 14 V16" stroke="#222"/></svg>
<svg style="left:599px;top:56px;" width="17" height="17" viewBox="0 0 17 17"><path d="M14.5 2 V15" stroke="#222"/><rect x="2" y="3" width="11" height="5" fill="#b4d0f8" stroke="#7aa2e2" stroke-width="0.8"/><rect x="1" y="9" width="12" height="5" fill="#6a9ae4" stroke="#7aa2e2" stroke-width="0.8"/></svg>
<svg style="left:630px;top:56px;" width="17" height="17" viewBox="0 0 17 17"><path d="M1 1.5 H14" stroke="#222"/><rect x="2" y="3" width="5" height="9" fill="#b4d0f8" stroke="#7aa2e2" stroke-width="0.8"/><rect x="8" y="3" width="5" height="12" fill="#6a9ae4" stroke="#7aa2e2" stroke-width="0.8"/></svg>
<svg style="left:653px;top:56px;" width="17" height="17" viewBox="0 0 17 17"><rect x="2" y="4" width="5" height="9" fill="#b4d0f8" stroke="#7aa2e2" stroke-width="0.8"/><rect x="8" y="2" width="5" height="13" fill="#6a9ae4" stroke="#7aa2e2" stroke-width="0.8"/><path d="M0 8.5 H2 M7 8.5 H8 M13 8.5 H15" stroke="#222"/></svg>
<svg style="left:676px;top:56px;" width="17" height="17" viewBox="0 0 17 17"><path d="M1 14.5 H14" stroke="#222"/><rect x="2" y="5" width="5" height="8" fill="#b4d0f8" stroke="#7aa2e2" stroke-width="0.8"/><rect x="8" y="1" width="5" height="12" fill="#6a9ae4" stroke="#7aa2e2" stroke-width="0.8"/></svg>
<svg style="left:706px;top:56px;" width="18" height="17" viewBox="0 0 18 17"><path d="M0 7.5 H17" stroke="#333" stroke-width="1"/><rect x="1" y="4" width="4" height="7" fill="#b4d0f8" stroke="#7aa2e2" stroke-width="0.8"/><rect x="7" y="2" width="4" height="11" fill="#6a9ae4" stroke="#7aa2e2" stroke-width="0.8"/><rect x="13" y="4" width="4" height="7" fill="#b4d0f8" stroke="#7aa2e2" stroke-width="0.8"/></svg>
<svg style="left:732px;top:55px;" width="14" height="18" viewBox="0 0 14 18"><path d="M5.5 0 V18" stroke="#333" stroke-width="1"/><rect x="2" y="1" width="7" height="4" fill="#b4d0f8" stroke="#7aa2e2" stroke-width="0.8"/><rect x="0" y="7" width="11" height="4" fill="#6a9ae4" stroke="#7aa2e2" stroke-width="0.8"/><rect x="2" y="13" width="7" height="4" fill="#b4d0f8" stroke="#7aa2e2" stroke-width="0.8"/></svg>
<svg style="left:761px;top:56px;" width="17" height="17" viewBox="0 0 17 17"><rect x="1.5" y="1.5" width="14" height="14" fill="#fff" stroke="#4a5a70" stroke-width="1.3"/><rect x="6.5" y="4" width="4" height="9" fill="#6a9ae4" stroke="#7aa2e2" stroke-width="0.8"/><path d="M3 8.5 H14" stroke="#222"/></svg>
<svg style="left:784px;top:56px;" width="17" height="17" viewBox="0 0 17 17"><rect x="1.5" y="1.5" width="14" height="14" fill="#fff" stroke="#4a5a70" stroke-width="1.3"/><rect x="4" y="6.5" width="9" height="4" fill="#6a9ae4" stroke="#7aa2e2" stroke-width="0.8"/><path d="M8.5 3 V14" stroke="#222"/></svg>
<svg style="left:814px;top:56px;" width="17" height="17" viewBox="0 0 17 17"><rect x="1" y="1" width="15" height="4" fill="#6a9ae4" stroke="#7aa2e2" stroke-width="0.8"/><rect x="2.5" y="7.5" width="12" height="7" fill="none" stroke="#555" stroke-dasharray="1 1.5"/><rect x="6.5" y="11" width="4" height="4" fill="#b4d0f8" stroke="#7aa2e2" stroke-width="0.8"/></svg>
<svg style="left:838px;top:56px;" width="17" height="17" viewBox="0 0 17 17"><rect x="10" y="1" width="5" height="15" fill="#6a9ae4" stroke="#7aa2e2" stroke-width="0.8"/><rect x="1.5" y="1.5" width="7" height="14" fill="none" stroke="#555" stroke-dasharray="1 1.5"/><rect x="1" y="6" width="4" height="5" fill="#b4d0f8" stroke="#7aa2e2" stroke-width="0.8"/></svg>
<div class="t" style="left:319px;top:85px;font-family:'Liberation Serif',serif;font-weight:700;font-size:14px;line-height:14px;color:#b8b8b8;">B</div>
<div class="t" style="left:342px;top:85px;font-family:'Liberation Serif',serif;font-weight:700;font-style:italic;font-size:14px;line-height:14px;color:#b8b8b8;">I</div>
<div class="t" style="left:363px;top:84px;font-family:'Liberation Serif',serif;font-size:14px;line-height:14px;color:#b8b8b8;">U</div>
<div style="left:364px;top:96px;width:9px;height:1px;background:#b8b8b8;"></div>
<div class="t" style="left:392px;top:84px;font-family:'Liberation Serif',serif;font-weight:700;font-size:12px;line-height:12px;color:#b4b4b4;">T</div>
<div class="t" style="left:398px;top:88px;font-family:'Liberation Serif',serif;font-weight:700;font-size:11px;line-height:11px;color:#c4c4c4;">T</div>
<div class="t" style="left:418px;top:84px;font-family:'Liberation Serif',serif;font-weight:700;font-style:italic;font-size:15px;line-height:15px;color:#c8c8c8;">A</div>
<svg style="left:440px;top:89px;" width="7" height="4" viewBox="0 0 7 4"><path d="M0 0 H7 L3.5 4 Z" fill="#505050"/></svg>
<div style="left:455px;top:86px;width:13px;height:11px;background:#cccccc;"></div>
<div class="t" style="left:456px;top:87px;font-size:10px;line-height:10px;color:#fff;">ab</div>
<svg style="left:477px;top:84px;" width="15" height="16" viewBox="0 0 15 16"><path d="M3 10 A5.5 5.5 0 1 1 10 13" fill="none" stroke="#c4c4c4" stroke-width="2.6"/><path d="M6 6 L10 8.5 L6 11 Z" fill="#c4c4c4"/></svg>
<svg style="left:509px;top:86px;" width="13" height="12" viewBox="0 0 13 12"><path d="M0 1.5 H12" stroke="#707070"/><path d="M0 3.5 H9" stroke="#707070"/><path d="M0 5.5 H12" stroke="#707070"/><path d="M0 7.5 H9" stroke="#707070"/><path d="M0 9.5 H12" stroke="#707070"/></svg>
<svg style="left:532px;top:86px;" width="13" height="12" viewBox="0 0 13 12"><path d="M0.0 1.5 H12.0" stroke="#707070"/><path d="M2.0 3.5 H10.0" stroke="#707070"/><path d="M0.0 5.5 H12.0" stroke="#707070"/><path d="M2.0 7.5 H10.0" stroke="#707070"/><path d="M0.0 9.5 H12.0" stroke="#707070"/></svg>
<svg style="left:555px;top:86px;" width="13" height="12" viewBox="0 0 13 12"><path d="M0 1.5 H12" stroke="#707070"/><path d="M3 3.5 H12" stroke="#707070"/><path d="M0 5.5 H12" stroke="#707070"/><path d="M3 7.5 H12" stroke="#707070"/><path d="M0 9.5 H12" stroke="#707070"/></svg>
<svg style="left:578px;top:86px;" width="13" height="12" viewBox="0 0 13 12"><path d="M0 1.5 H12" stroke="#707070"/><path d="M0 3.5 H12" stroke="#707070"/><path d="M0 5.5 H12" stroke="#707070"/><path d="M0 7.5 H12" stroke="#707070"/><path d="M0 9.5 H12" stroke="#707070"/></svg>
<svg style="left:610px;top:85px;" width="12" height="13" viewBox="0 0 12 13"><path d="M0.5 0 V12" stroke="#a0a0a0"/><path d="M3.0 0 V9" stroke="#a0a0a0"/><path d="M5.5 0 V12" stroke="#a0a0a0"/><path d="M8.0 0 V9" stroke="#a0a0a0"/><path d="M10.5 0 V12" stroke="#a0a0a0"/></svg>
<svg style="left:633px;top:85px;" width="12" height="13" viewBox="0 0 12 13"><path d="M0.5 0 V12" stroke="#a0a0a0"/><path d="M3.0 2 V10" stroke="#a0a0a0"/><path d="M5.5 0 V12" stroke="#a0a0a0"/><path d="M8.0 2 V10" stroke="#a0a0a0"/><path d="M10.5 0 V12" stroke="#a0a0a0"/></svg>
<svg style="left:656px;top:85px;" width="12" height="13" viewBox="0 0 12 13"><path d="M0.5 0 V12" stroke="#a0a0a0"/><path d="M3.0 3 V12" stroke="#a0a0a0"/><path d="M5.5 0 V12" stroke="#a0a0a0"/><path d="M8.0 3 V12" stroke="#a0a0a0"/><path d="M10.5 0 V12" stroke="#a0a0a0"/></svg>
<svg style="left:689px;top:85px;" width="14" height="14" viewBox="0 0 14 14"><rect x="1.5" y="1.5" width="11" height="11" fill="none" stroke="#bcbcbc" stroke-dasharray="1 1"/><path d="M7 1.5 V12.5 M1.5 7 H12.5" stroke="#bcbcbc" stroke-dasharray="1 1"/><path d="M1 1.5 H13" stroke="#a8a8a8"/></svg>
<svg style="left:712px;top:85px;" width="14" height="14" viewBox="0 0 14 14"><rect x="1.5" y="1.5" width="11" height="11" fill="none" stroke="#bcbcbc" stroke-dasharray="1 1"/><path d="M7 1.5 V12.5 M1.5 7 H12.5" stroke="#bcbcbc" stroke-dasharray="1 1"/><path d="M1 12.5 H13" stroke="#a8a8a8"/></svg>
<svg style="left:735px;top:85px;" width="14" height="14" viewBox="0 0 14 14"><rect x="1.5" y="1.5" width="11" height="11" fill="none" stroke="#bcbcbc" stroke-dasharray="1 1"/><path d="M7 1.5 V12.5 M1.5 7 H12.5" stroke="#bcbcbc" stroke-dasharray="1 1"/><path d="M1.5 1 V13" stroke="#a8a8a8"/></svg>
<svg style="left:758px;top:85px;" width="14" height="14" viewBox="0 0 14 14"><rect x="1.5" y="1.5" width="11" height="11" fill="none" stroke="#bcbcbc" stroke-dasharray="1 1"/><path d="M7 1.5 V12.5 M1.5 7 H12.5" stroke="#bcbcbc" stroke-dasharray="1 1"/><path d="M12.5 1 V13" stroke="#a8a8a8"/></svg>
<svg style="left:789px;top:85px;" width="14" height="14" viewBox="0 0 14 14"><rect x="1.5" y="1.5" width="11" height="11" fill="none" stroke="#bcbcbc" stroke-dasharray="1 1"/><path d="M7 1.5 V12.5 M1.5 7 H12.5" stroke="#bcbcbc" stroke-dasharray="1 1"/><path d="M1 1.5 H13" stroke="#a8a8a8"/><path d="M1 12.5 H13" stroke="#a8a8a8"/><path d="M1.5 1 V13" stroke="#a8a8a8"/><path d="M12.5 1 V13" stroke="#a8a8a8"/></svg>
<svg style="left:812px;top:85px;" width="14" height="14" viewBox="0 0 14 14"><rect x="1.5" y="1.5" width="11" height="11" fill="none" stroke="#bcbcbc" stroke-dasharray="1 1"/><path d="M7 1.5 V12.5 M1.5 7 H12.5" stroke="#bcbcbc" stroke-dasharray="1 1"/></svg>
<svg style="left:835px;top:85px;" width="14" height="14" viewBox="0 0 14 14"><rect x="1.5" y="1.5" width="11" height="11" fill="none" stroke="#bcbcbc" stroke-dasharray="1 1"/><path d="M7 1.5 V12.5 M1.5 7 H12.5" stroke="#bcbcbc" stroke-dasharray="1 1"/></svg>
<svg style="left:838px;top:88px;" width="10" height="10" viewBox="0 0 10 10"><path d="M1 9 L6 4" stroke="#c8c8c8" stroke-width="2.2"/><circle cx="7" cy="3" r="2" fill="none" stroke="#c8c8c8" stroke-width="1.3"/></svg>
<svg style="left:867px;top:83px;" width="17" height="17" viewBox="0 0 17 17"><path d="M2 8 L8 3 L14 9 L8 14 Z" fill="#e8e8e8" stroke="#bcbcbc"/><path d="M8 3 Q12 1 15 6 L15 10" fill="none" stroke="#c8c8c8" stroke-width="1.5"/><rect x="1" y="15" width="14" height="2" fill="#e4e4e4"/></svg>
<svg style="left:890px;top:89px;" width="7" height="4" viewBox="0 0 7 4"><path d="M0 0 H7 L3.5 4 Z" fill="#505050"/></svg>
<div style="left:905px;top:86px;width:14px;height:13px;background:linear-gradient(#f0f0f0,#d4d4d4);border:1px solid #c4c4c4;box-sizing:border-box;"></div>
<svg style="left:929px;top:84px;" width="15" height="16" viewBox="0 0 15 16"><path d="M2 12 L11 3 L13 5 L4 14 Z" fill="#e0e0e0" stroke="#c4c4c4"/><rect x="1" y="15" width="13" height="1.5" fill="#e4e4e4"/></svg>
<svg style="left:951px;top:89px;" width="7" height="4" viewBox="0 0 7 4"><path d="M0 0 H7 L3.5 4 Z" fill="#505050"/></svg>
<svg style="left:965px;top:85px;" width="16" height="13" viewBox="0 0 16 13"><path d="M0 1.5 H15" stroke="#bcbcbc"/><path d="M0 5.5 H15" stroke="#bcbcbc" stroke-dasharray="3 1"/><path d="M0 9.5 H15" stroke="#bcbcbc" stroke-dasharray="2 2"/><path d="M0 12.5 H15" stroke="#bcbcbc" stroke-dasharray="1 2"/></svg>
<svg style="left:15px;top:110px;" width="12" height="16" viewBox="0 0 12 16"><path d="M1 1 L1 12 L4 9.5 L6.5 14.5 L8.5 13.5 L6 8.5 L10 8.5 Z" fill="#222" stroke="#111" stroke-width="0.6"/></svg>
<svg style="left:425px;top:131px;" width="18" height="17" viewBox="0 0 18 17"><defs><linearGradient id="fo2" x1="0" y1="0" x2="0" y2="1"><stop offset="0" stop-color="#f8d878"/><stop offset="1" stop-color="#e8a818"/></linearGradient></defs><path d="M1.5 5.5 H6 L7.5 7 H13.5 V15.5 H1.5 Z" fill="url(#fo2)" stroke="#c8701c"/><path d="M1.5 15.5 L3.5 9.5 H15.5 L13.5 15.5 Z" fill="#f6c33c" stroke="#c8701c"/><path d="M10 4 Q13 0.5 16 3" fill="none" stroke="#34508a" stroke-width="1.2"/><path d="M15 1.5 L17 4 L14 4.5 Z" fill="#34508a"/></svg>
<svg style="left:448px;top:131px;" width="18" height="18" viewBox="0 0 18 18"><rect x="1.5" y="1.5" width="15" height="15" rx="1.5" fill="#6c9ae2" stroke="#3a5ca4"/><rect x="4" y="2" width="10" height="5" fill="#f0f4fc"/><rect x="6" y="3" width="1.5" height="3" fill="#3a5ca4"/><rect x="4" y="10" width="10" height="6" fill="#fff"/><rect x="5" y="11" width="8" height="1.5" fill="#7cc050"/><rect x="5" y="13.5" width="8" height="1.5" fill="#7cc050"/></svg>
<svg style="left:484px;top:134px;" width="9" height="13" viewBox="0 0 9 13"><path d="M0.5 0.5 L8 6.5 L0.5 12.5 Z" fill="#2a9a2a"/></svg>
<svg style="left:504px;top:134px;" width="15" height="13" viewBox="0 0 15 13"><path d="M1 4.5 H6" stroke="#3a6ad0" stroke-width="1.5"/><path d="M5 2 L8 4.5 L5 7 Z" fill="#3a6ad0"/><path d="M9 1.5 H14 M9 4.5 H14 M9 7.5 H14 M5 10.5 H14" stroke="#111" stroke-width="1.3"/></svg>
<svg style="left:527px;top:133px;" width="16" height="14" viewBox="0 0 16 14"><path d="M2 5 Q0 1 4 1.5 L7 3" fill="none" stroke="#3a6ad0" stroke-width="1.4"/><path d="M5 4 L8 5.5 L5 7 Z" fill="#3a6ad0"/><path d="M9 2.5 H15 M9 5.5 H15 M9 8.5 H15 M5 11.5 H15" stroke="#111" stroke-width="1.3"/></svg>
<svg style="left:552px;top:135px;" width="10" height="10" viewBox="0 0 10 10"><rect x="0.5" y="0.5" width="9" height="9" fill="#6a9ae8" stroke="#2f5ab8"/><rect x="1.5" y="1.5" width="4" height="4" fill="#b8d0f8"/></svg>
<svg style="left:571px;top:132px;" width="18" height="16" viewBox="0 0 18 16"><rect x="3.5" y="0.5" width="13" height="13" fill="#fff" stroke="#3f5580"/><rect x="4" y="1" width="12" height="2.5" fill="#6c9ae2"/><path d="M7 6 H14 M7 8.5 H14 M7 11 H12" stroke="#3a6ad0" stroke-dasharray="1.5 1"/><circle cx="4" cy="13" r="2.2" fill="#cde" stroke="#222" stroke-width="1.2"/><circle cx="9" cy="13" r="2.2" fill="#cde" stroke="#222" stroke-width="1.2"/></svg>
<svg style="left:595px;top:132px;" width="17" height="17" viewBox="0 0 17 17"><circle cx="6" cy="6" r="4.5" fill="#fde8e8" stroke="#d08080"/><circle cx="10" cy="10" r="5" fill="#e03030"/><circle cx="8.5" cy="8.5" r="1.8" fill="#f8a0a0"/></svg>
<svg style="left:272px;top:544px;" width="17" height="17" viewBox="0 0 17 17"><g transform="translate(0,0)"><rect x="0" y="0" width="7" height="7" fill="#f6e27a" opacity="0.9"/><path d="M3.5 0 V7 M0 3.5 H7 M1 1 L6 6 M6 1 L1 6" stroke="#e0b020" stroke-width="0.8"/><circle cx="3.5" cy="3.5" r="1.5" fill="#fff"/></g><g transform="translate(3,10)"><circle cx="3" cy="3" r="2.3" fill="#cfe0f4" stroke="#111" stroke-width="1.2"/><circle cx="10" cy="3" r="2.3" fill="#cfe0f4" stroke="#111" stroke-width="1.2"/><path d="M5 2.5 H8 M12 3 V-3" stroke="#111" stroke-width="1.1"/></g></svg>
<svg style="left:295px;top:544px;" width="17" height="17" viewBox="0 0 17 17"><path d="M1 1 L7 7 M7 1 L1 7" stroke="#e02020" stroke-width="2"/><g transform="translate(3,10)"><circle cx="3" cy="3" r="2.3" fill="#cfe0f4" stroke="#111" stroke-width="1.2"/><circle cx="10" cy="3" r="2.3" fill="#cfe0f4" stroke="#111" stroke-width="1.2"/><path d="M5 2.5 H8 M12 3 V-3" stroke="#111" stroke-width="1.1"/></g></svg>
<svg style="left:318px;top:544px;" width="17" height="17" viewBox="0 0 17 17"><rect x="1.5" y="4.5" width="11" height="11" fill="#fff" stroke="#3f5580"/><path d="M3 7 H5 M6 7 H11 M3 9.5 H5 M6 9.5 H11 M3 12 H5 M6 12 H11" stroke="#3a6ad0"/><path d="M8 11 L14 3 L16 4.5 L10 12 Z" fill="#f0b040" stroke="#c07820" stroke-width="0.8"/></svg>
<svg style="left:87px;top:642px;" width="17" height="15" viewBox="0 0 17 15"><path d="M1 2.5 H16" stroke="#606060" stroke-dasharray="1 1"/><path d="M2.5 1 V15" stroke="#606060" stroke-dasharray="1 1"/><rect x="5.5" y="6.5" width="8" height="8" fill="#cfe0fa" stroke="#7aa0d8"/></svg>
<svg style="left:1066px;top:647px;" width="10" height="10" viewBox="0 0 10 10"><rect x="7" y="1" width="2" height="2" fill="#b0b0b0"/><rect x="4" y="4" width="2" height="2" fill="#b0b0b0"/><rect x="7" y="4" width="2" height="2" fill="#b0b0b0"/><rect x="1" y="7" width="2" height="2" fill="#b0b0b0"/><rect x="4" y="7" width="2" height="2" fill="#b0b0b0"/><rect x="7" y="7" width="2" height="2" fill="#b0b0b0"/></svg>
<div style="left:488px;top:321px;width:29px;height:29px;border-radius:50%;box-sizing:border-box;border:2px solid #ff1010;background:radial-gradient(circle at 40% 35%,#ec5858,#d83434);box-shadow:2px 3px 4px rgba(0,0,0,0.28);"></div>
<div class="t" style="left:498px;top:327px;font-size:14px;line-height:14px;color:#fff;transform:scaleY(1.1);transform-origin:0 0;">8</div>
</body></html>
